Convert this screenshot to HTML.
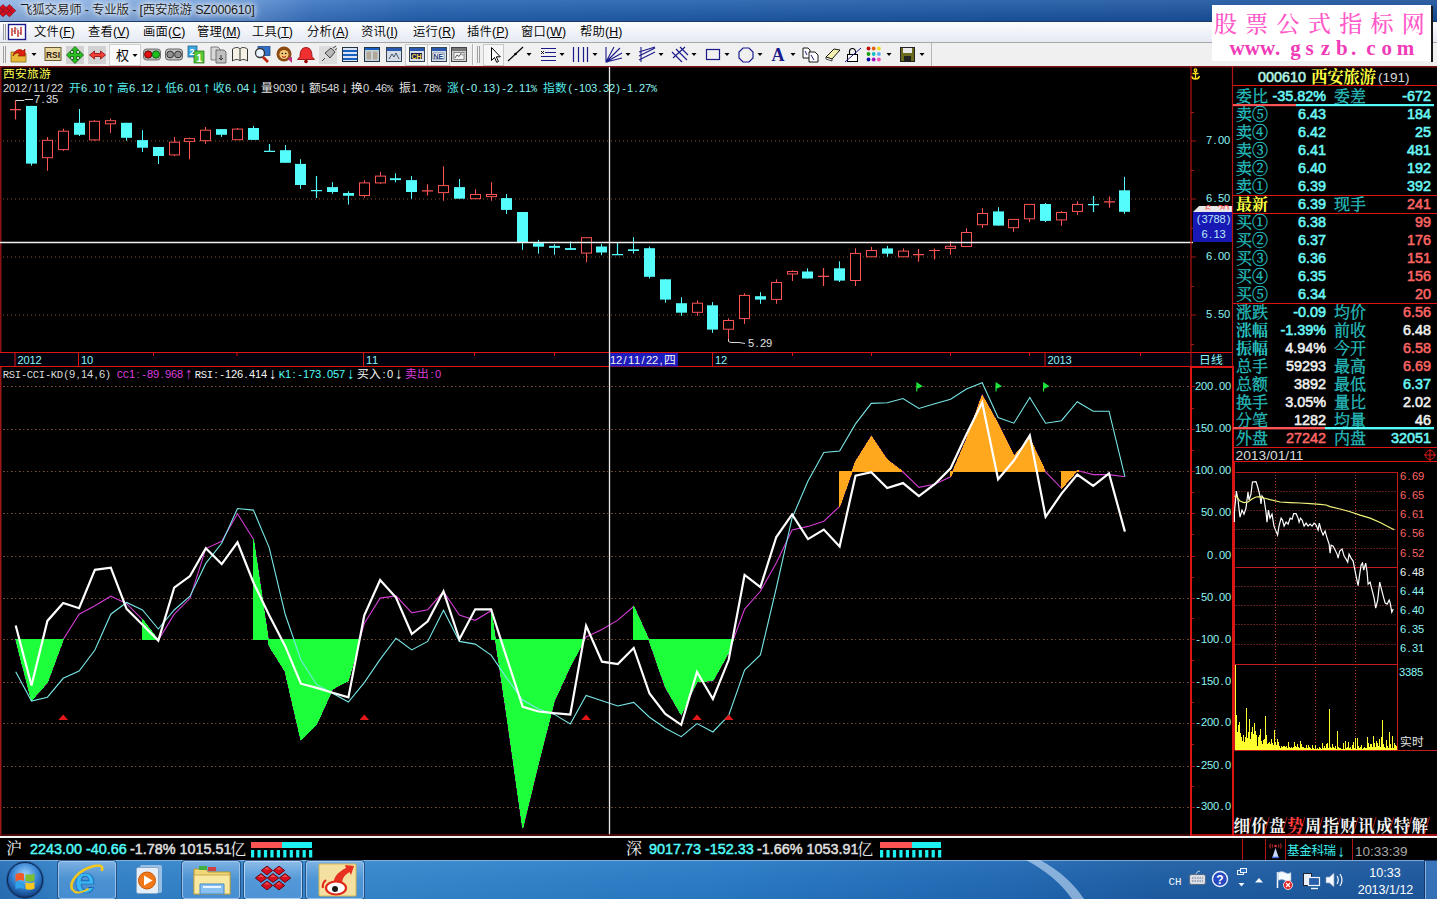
<!DOCTYPE html>
<html lang="zh"><head><meta charset="utf-8"><title>飞狐交易师 - 专业版 - [西安旅游 SZ000610]</title>
<style>
html,body{margin:0;padding:0;background:#000;}
body{width:1437px;height:899px;position:relative;overflow:hidden;font-family:"Liberation Sans","Noto Sans CJK SC",sans-serif;}
.abs{position:absolute;}
#titlebar{left:0;top:0;width:1437px;height:21px;background:linear-gradient(90deg,#8fb4e4 0,#82abe0 120px,#6293d4 240px,#3a75c2 310px,#2563b2 420px,#1c59a6 900px,#174f98 1437px);}
#titlebar .shade{left:0;top:0;width:1437px;height:21px;background:linear-gradient(180deg,rgba(255,255,255,.10),rgba(0,0,30,.10));}
#titletext{left:20px;top:2px;font-size:12.5px;line-height:17px;color:#1a1a1a;font-weight:350;white-space:nowrap;text-shadow:0 0 4px #fff,0 0 6px #fff,0 0 8px #dfe9f8;letter-spacing:-0.2px;}
#menubar{left:0;top:21px;width:1437px;height:21px;background:linear-gradient(180deg,#fbfcfe,#eef1f7 60%,#e6eaf3);border-top:1px solid #1c3a66;box-sizing:border-box;}
#menubar span.mi{position:absolute;top:3px;font-size:12.3px;line-height:15px;color:#000;font-weight:350;letter-spacing:.15px;white-space:nowrap;}
#menubar u{text-decoration:underline;}
#toolbar{left:0;top:42px;width:1437px;height:24px;background:#f0f0f0;border-top:1px solid #a8a8a8;box-sizing:border-box;}
#wm{left:1212px;top:5px;width:219px;height:56px;background:#fff;}
svg{position:absolute;left:0;top:0;}
</style></head><body>
<div id="titlebar" class="abs"><div class="shade abs"></div></div>
<svg width="20" height="21" viewBox="0 0 20 21" style="left:0;top:0"><g fill="#d80c1c" stroke="#6a0008" stroke-width=".5"><path d="M-0.2 7.5l3.200-2.900 3.200 2.900-3.200 2.900z"/><path d="M6.2 7.5l3.200-2.900 3.200 2.900-3.200 2.900z"/><path d="M-3.4 10.7l3.200-2.900 3.200 2.900-3.200 2.900z"/><path d="M3 10.7l3.200-2.900 3.200 2.900-3.200 2.900z"/><path d="M9.4 10.7l3.200-2.900 3.200 2.900-3.200 2.900z"/><path d="M-0.2 13.9l3.200-2.900 3.200 2.900-3.200 2.900z"/><path d="M6.2 13.9l3.200-2.900 3.200 2.900-3.200 2.900z"/></g></svg>
<div id="titletext" class="abs">飞狐交易师 - 专业版 - [西安旅游 SZ000610]</div>
<div id="menubar" class="abs">
<svg width="30" height="20" viewBox="0 0 30 20" style="left:0;top:0"><path d="M3.5 2v16M5.5 2v16" stroke="#9a9a9a" stroke-width="1"/><rect x="8.5" y="2.5" width="17" height="15" fill="#fff" stroke="#1a1a8a" stroke-width="1.4"/><path d="M12 6v8M15 5v7M18 8v7M21 5v8" stroke="#c01818" stroke-width="1.3"/><path d="M13.5 9h1M16.5 7h1M19.5 11h1" stroke="#111" stroke-width="1"/></svg>
<span class="mi" style="left:34px">文件(<u>F</u>)</span>
<span class="mi" style="left:88px">查看(<u>V</u>)</span>
<span class="mi" style="left:143px">画面(<u>C</u>)</span>
<span class="mi" style="left:197px">管理(<u>M</u>)</span>
<span class="mi" style="left:252px">工具(<u>T</u>)</span>
<span class="mi" style="left:307px">分析(<u>A</u>)</span>
<span class="mi" style="left:361px">资讯(<u>I</u>)</span>
<span class="mi" style="left:413px">运行(<u>R</u>)</span>
<span class="mi" style="left:467px">插件(<u>P</u>)</span>
<span class="mi" style="left:521px">窗口(<u>W</u>)</span>
<span class="mi" style="left:580px">帮助(<u>H</u>)</span>
</div>
<div id="toolbar" class="abs"></div>
<svg width="1437" height="70" viewBox="0 0 1437 70"><path d="M3.5 46v17M5.5 46v17" stroke="#a0a0a0"/><path d="M11 52h6l1 1.5h8v8.5h-15z" fill="#e8b838" stroke="#8a6a10" stroke-width=".8"/><path d="M13 56c1-6 7-8 10-5l2-2v7h-7l2-2c-2-2-5-1-7 2z" fill="#e02010" stroke="#7a0a00" stroke-width=".6"/><path d="M31.5 53h5l-2.5 3z" fill="#000"/><rect x="45" y="47.5" width="16" height="13" fill="#e8d8a0" stroke="#6a5a30" stroke-width="1"/><text x="46" y="58" font-family='"Liberation Sans",sans-serif' font-size="9" font-weight="bold" fill="#301808" textLength="14" lengthAdjust="spacingAndGlyphs">RSI</text><rect x="66" y="46" width="18" height="18" fill="#d2d2d2"/><path d="M75 46.5l4 4h-2.5v3h3v-2.5l4 4-4 4v-2.5h-3v3h2.5l-4 4-4-4h2.5v-3h-3v2.5l-4-4 4-4v2.5h3v-3h-2.5z" fill="#28c020" stroke="#0a5a08" stroke-width=".8"/><rect x="88" y="46" width="18" height="18" fill="#d2d2d2"/><path d="M89.500 55l5-4v2.500h6v-2.500l5 4-5 4v-2.500h-6v2.500z" fill="#f04038" stroke="#8a0a08" stroke-width=".8"/><rect x="109.500" y="44.500" width="31" height="21" fill="#fafafa" stroke="#d0d0d0"/><text x="116" y="60" font-family='"Liberation Sans","Noto Sans CJK SC",sans-serif' font-size="13" fill="#000">权</text><path d="M132.5 54h5l-2.5 3z" fill="#000"/><rect x="143.500" y="49" width="17" height="11" rx="3" fill="#b8b8b8" stroke="#555" stroke-width=".8"/><circle cx="148.200" cy="54.500" r="3.600" fill="#e01010" stroke="#600"/><circle cx="156" cy="54.500" r="3.600" fill="#20c020" stroke="#060"/><rect x="165.500" y="49" width="17" height="11" rx="3" fill="#c4c4c4" stroke="#444" stroke-width=".8"/><circle cx="170.200" cy="54.500" r="3.400" fill="#909090" stroke="#333"/><circle cx="178" cy="54.500" r="3.400" fill="#909090" stroke="#333"/><rect x="188" y="46" width="9" height="11" fill="#40a8e0" stroke="#105080" stroke-width=".7"/><rect x="194" y="51" width="10" height="12" fill="#58c838" stroke="#1a6a10" stroke-width=".7"/><text x="189.500" y="55" font-size="9" font-weight="bold" fill="#fff" font-family='"Liberation Sans",sans-serif'>2</text><text x="196.500" y="61.500" font-size="10" font-weight="bold" fill="#fff" font-family='"Liberation Sans",sans-serif'>1</text><path d="M211 47h7l2 2v11h-9z" fill="#d8d8d8" stroke="#666" stroke-width=".8"/><path d="M216 50h8l2 2v11h-10z" fill="#c0c0c0" stroke="#555" stroke-width=".8"/><path d="M221 55v5m-2-2l2 2 2-2" stroke="#333" fill="none"/><path d="M232.500 49c3-2 6-2 7.500 0 1.500-2 4.500-2 7.500 0v12c-3-2-6-2-7.500 0-1.500-2-4.500-2-7.500 0z" fill="#f4f0e4" stroke="#333" stroke-width="1"/><path d="M240 49v12" stroke="#333"/><rect x="258" y="46.500" width="12" height="9" fill="#3070c8" stroke="#123a7a" stroke-width=".7"/><circle cx="260" cy="53" r="4.500" fill="#e8f4ff" stroke="#333" stroke-width="1.300"/><path d="M263 57l5 5" stroke="#c02010" stroke-width="2.600"/><circle cx="284" cy="54" r="7.500" fill="#8a4a10"/><circle cx="284" cy="54.500" r="4.600" fill="#f4c878"/><circle cx="282.300" cy="53.500" r=".8"/><circle cx="285.700" cy="53.500" r=".8"/><path d="M282 56.500q2 1.500 4 0" stroke="#a02010" fill="none"/><path d="M287 58l5-1v6z" fill="#c03080"/><path d="M306 47.500c5 0 6 5 6 9l2.500 3h-17l2.500-3c0-4 1-9 6-9z" fill="#f03030" stroke="#800" stroke-width=".8"/><circle cx="306" cy="61.500" r="1.800" fill="#900"/><rect x="319" y="46" width="18" height="18" fill="#dcdcdc"/><path d="M322 61l3-3m0-5l6-5 4 4-5 6z" fill="#b8b8b8" stroke="#444" stroke-width="1"/><path d="M333 48l3-2M335 50l2-1.500" stroke="#444"/><rect x="342.500" y="47.500" width="15" height="14" fill="#d8e4f4" stroke="#234" stroke-width="1"/><path d="M343 51h14M343 55h14M343 59h14" stroke="#1860c0" stroke-width="2"/><rect x="364.500" y="47.500" width="15" height="14" fill="#c8d0d8" stroke="#234" stroke-width="1"/><path d="M365 49h14" stroke="#1860c0" stroke-width="2"/><rect x="366.500" y="51.500" width="4.500" height="8" fill="#b0a898"/><rect x="373" y="51.500" width="4.500" height="8" fill="#b0a898"/><rect x="386.5" y="47.500" width="15" height="14" fill="#d4dce8" stroke="#345" stroke-width="1"/><path d="M387 49.500h14" stroke="#2858b0" stroke-width="3"/><path d="M389 59l3-5 2 3 2-4 3 6" stroke="#345" fill="none" stroke-width=".9"/><rect x="405.500" y="44.500" width="22" height="21" fill="#f8f8f8" stroke="#c8c8c8"/><rect x="409.5" y="47.500" width="15" height="14" fill="#d4dce8" stroke="#345" stroke-width="1"/><path d="M410 49.500h14" stroke="#2858b0" stroke-width="3"/><rect x="411" y="53" width="11" height="6" fill="#181858"/><text x="411.500" y="59" font-size="7" font-weight="bold" fill="#ffe040" font-family='"Liberation Sans",sans-serif'>CH</text><rect x="427.500" y="44.500" width="22" height="21" fill="#f8f8f8" stroke="#c8c8c8"/><rect x="431.5" y="47.500" width="15" height="14" fill="#d4dce8" stroke="#345" stroke-width="1"/><path d="M432 49.500h14" stroke="#2858b0" stroke-width="3"/><rect x="433" y="53" width="11" height="6" fill="#fff" stroke="#346" stroke-width=".5"/><text x="433.500" y="59" font-size="7" font-weight="bold" fill="#1a3a7a" font-family='"Liberation Sans",sans-serif'>NE</text><rect x="451.500" y="47.500" width="15" height="14" fill="#d0d0d0" stroke="#444" stroke-width="1"/><path d="M452 49.500h14" stroke="#777" stroke-width="3"/><rect x="454" y="52.500" width="10" height="7" fill="#f4f4f4" stroke="#555" stroke-width=".6"/><path d="M455 58l2-3 2 1.500 2-3 2 2" stroke="#333" fill="none" stroke-width=".8"/><path d="M472.500 44v21" stroke="#b0b0b0"/><path d="M473.500 44v21" stroke="#fff"/><path d="M477.500 46v17M479.500 46v17" stroke="#a0a0a0"/><rect x="483.500" y="44.500" width="20" height="21" fill="#f6f6f6" stroke="#c8c8c8"/><path d="M491.500 47.500v13l3-3 2.200 4.800 1.800-.8-2.200-4.700h4z" fill="#fff" stroke="#000" stroke-width="1"/><path d="M508 61l15-14" stroke="#000" stroke-width="1.200"/><circle cx="515.500" cy="54" r="1.300"/><path d="M526.5 53h5l-2.5 3z" fill="#000"/><path d="M541 48.500h15M545 52.500h11M541 56.500h15M541 60.500h15" stroke="#1a1a8a" stroke-width="1.200"/><path d="M541 51l3 3m0-3l-3 3" stroke="#000" stroke-width=".9"/><path d="M559.5 53h5l-2.5 3z" fill="#000"/><path d="M573.500 47v15M578.500 47v15M583.500 47v15M587.500 47v15" stroke="#1a1a8a" stroke-width="1.200"/><path d="M592.5 53h5l-2.5 3z" fill="#000"/><path d="M606 47v15h2M606 62l16-4M606 62l16-9M606 62l14-14M606 62l8-15" stroke="#1a1a8a" stroke-width="1.100" fill="none"/><path d="M625.5 53h5l-2.5 3z" fill="#000"/><path d="M641 47v15M639 56l16-8M639 60l16-8M639 52l16-5" stroke="#1a1a8a" stroke-width="1.100" fill="none"/><path d="M658.5 53h5l-2.5 3z" fill="#000"/><path d="M672 52l10 10M676 49l11 11M680 47l8 8M673 58l12-11" stroke="#1a1a8a" stroke-width="1.100" fill="none"/><path d="M691.5 53h5l-2.5 3z" fill="#000"/><rect x="706.500" y="49.500" width="13" height="10" fill="none" stroke="#1a1a8a" stroke-width="1.200"/><path d="M724.5 53h5l-2.5 3z" fill="#000"/><path d="M743 48h6l4 4v6l-4 4h-6l-4-4v-6z" fill="none" stroke="#1a1a8a" stroke-width="1.200"/><path d="M757.5 53h5l-2.5 3z" fill="#000"/><text x="771.500" y="61" font-family='"Liberation Serif",serif' font-size="18" font-weight="bold" fill="#1a1a8a">A</text><path d="M790.5 53h5l-2.5 3z" fill="#000"/><path d="M803 48h5l2 2v8h-7z" fill="#fff" stroke="#000" stroke-width=".9"/><path d="M809 52h6l3 3v7h-9z" fill="#fff" stroke="#000" stroke-width=".9"/><path d="M805 51l2 4M811 55l3 5" stroke="#1a1a8a"/><path d="M826 57l8-8 6 1-8 9z" fill="#f4f0b0" stroke="#000" stroke-width=".9"/><path d="M826 57l6 2v2l-6-2z" fill="#fff" stroke="#000" stroke-width=".7"/><rect x="847.500" y="54.500" width="10" height="7" fill="#fff" stroke="#000" stroke-width="1"/><path d="M849.500 54.500v-3a3 3 0 0 1 6 0v3" fill="none" stroke="#000" stroke-width="1.100"/><path d="M845 62l16-14" stroke="#1a1a8a" stroke-width="1"/><circle cx="868.5" cy="48.5" r="1.900" fill="#c01010"/><circle cx="873.7" cy="48.5" r="1.900" fill="#e06010"/><circle cx="878.9" cy="48.5" r="1.900" fill="#f0e020"/><circle cx="868.5" cy="54" r="1.900" fill="#10a010"/><circle cx="873.7" cy="54" r="1.900" fill="#10c0c0"/><circle cx="878.9" cy="54" r="1.900" fill="#60b0f0"/><circle cx="868.5" cy="59.5" r="1.900" fill="#1010a0"/><circle cx="873.7" cy="59.5" r="1.900" fill="#a010c0"/><circle cx="878.9" cy="59.5" r="1.900" fill="#f050b0"/><path d="M886.5 53h5l-2.5 3z" fill="#000"/><rect x="900.500" y="47.500" width="14" height="14" fill="#6a6a20" stroke="#222" stroke-width="1"/><rect x="903" y="48" width="9" height="5" fill="#e8e8e8"/><rect x="904" y="56" width="7" height="5" fill="#222"/><path d="M919.5 53h5l-2.5 3z" fill="#000"/><path d="M931.500 43v23" stroke="#b8b8b8"/><path d="M0 65.500h932" stroke="#fff" stroke-width="0"/></svg>
<div id="wm" class="abs"></div>
<svg width="1437" height="70" viewBox="0 0 1437 70"><rect x="1431" y="6" width="2" height="56" fill="#181818"/><text x="1214.0 1245.3 1276.6 1307.9 1339.2 1370.5 1401.8" y="31.5" font-family='"Liberation Serif","Noto Serif CJK SC",serif' font-size="23" font-weight="500" fill="#ff58c8">股票公式指标网</text><text x="1229.5 1244.7 1259.9 1275.1 1290.3 1305.5 1320.7 1335.9 1351.1 1366.3 1381.5 1396.7" y="54.5" font-family='"Liberation Serif","Noto Serif CJK SC",serif' font-size="21" font-weight="bold" fill="#f03cb8">www.gszb.com</text></svg>
<svg width="1437" height="899" viewBox="0 0 1437 899" shape-rendering="auto"><rect x="0" y="66" width="1437" height="772" fill="#000"/><rect x="0" y="66" width="1437" height="1.5" fill="#7a1418"/><rect x="0" y="66" width="1.5" height="302" fill="#8a1418"/><path d="M3 141H1190" stroke="#84502f" stroke-width="1" stroke-dasharray="1 3"/><path d="M1191 141h5" stroke="#a01414"/><path d="M3 199H1190" stroke="#84502f" stroke-width="1" stroke-dasharray="1 3"/><path d="M1191 199h5" stroke="#a01414"/><path d="M3 257H1190" stroke="#84502f" stroke-width="1" stroke-dasharray="1 3"/><path d="M1191 257h5" stroke="#a01414"/><path d="M3 315H1190" stroke="#84502f" stroke-width="1" stroke-dasharray="1 3"/><path d="M1191 315h5" stroke="#a01414"/><path d="M1191 112.5h3" stroke="#a01414"/><path d="M1191 170.5h3" stroke="#a01414"/><path d="M1191 228.5h3" stroke="#a01414"/><path d="M1191 286.5h3" stroke="#a01414"/><path d="M1191 344.5h3" stroke="#a01414"/><path d="M15.5 100.6V119.6M10 109.7h11" stroke="#fc5454" stroke-width="1.2"/><path d="M31.5 105.9V165.7" stroke="#54fcfc"/><rect x="26" y="105.9" width="11" height="57.7" fill="#54fcfc"/><path d="M47.5 137.0V140.3M47.5 157.7V170.8" stroke="#fc5454"/><rect x="42.5" y="140.3" width="10" height="17.4" fill="#000" stroke="#fc5454"/><path d="M63.5 128.7V131.2M63.5 149.6V150.9" stroke="#fc5454"/><rect x="58.5" y="131.2" width="10" height="18.4" fill="#000" stroke="#fc5454"/><path d="M79.5 109V136" stroke="#54fcfc"/><rect x="74" y="122.8" width="11" height="12.0" fill="#54fcfc"/><path d="M94.5 120.2V121.3M94.5 139.9V140.7" stroke="#fc5454"/><rect x="89.5" y="121.3" width="10" height="18.6" fill="#000" stroke="#fc5454"/><path d="M110.5 118.5V120.7M110.5 123.8V132.9" stroke="#fc5454"/><rect x="105.5" y="120.7" width="10" height="3.1" fill="#000" stroke="#fc5454"/><path d="M126.5 122.8V140.7" stroke="#54fcfc"/><rect x="121" y="122.8" width="11" height="15.0" fill="#54fcfc"/><path d="M142.5 130.2V152" stroke="#54fcfc"/><rect x="137" y="140.1" width="11" height="7.6" fill="#54fcfc"/><path d="M158.5 147V164" stroke="#54fcfc"/><rect x="153" y="147.0" width="11" height="9.0" fill="#54fcfc"/><path d="M174.5 137.0V142.2M174.5 154.9V156.2" stroke="#fc5454"/><rect x="169.5" y="142.2" width="10" height="12.7" fill="#000" stroke="#fc5454"/><path d="M189.5 137.6V138.6M189.5 141.4V159.3" stroke="#fc5454"/><rect x="184.5" y="138.6" width="10" height="2.8" fill="#000" stroke="#fc5454"/><path d="M205.5 127.0V130.2M205.5 140.7V143.9" stroke="#fc5454"/><rect x="200.5" y="130.2" width="10" height="10.5" fill="#000" stroke="#fc5454"/><path d="M221.5 129.1V136.9" stroke="#54fcfc"/><rect x="216" y="129.1" width="11" height="5.7" fill="#54fcfc"/><path d="M237.5 128.0V129.1M237.5 139.7V140.0" stroke="#fc5454"/><rect x="232.5" y="129.1" width="10" height="10.6" fill="#000" stroke="#fc5454"/><path d="M253.5 125.9V139.9" stroke="#54fcfc"/><rect x="248" y="128.0" width="11" height="11.9" fill="#54fcfc"/><path d="M269.5 143.9V151.3M264 151.3h11" stroke="#54fcfc" stroke-width="1.2"/><path d="M285.5 145.1V162.8" stroke="#54fcfc"/><rect x="280" y="150.2" width="11" height="12.6" fill="#54fcfc"/><path d="M300.5 159.2V188.8" stroke="#54fcfc"/><rect x="295" y="163.9" width="11" height="21.1" fill="#54fcfc"/><path d="M316.5 176.1V198.1M311 190.7h11" stroke="#54fcfc" stroke-width="1.2"/><path d="M332.5 182.2V193.8" stroke="#54fcfc"/><rect x="327" y="187.1" width="11" height="4.9" fill="#54fcfc"/><path d="M348.5 191.3V204.6" stroke="#54fcfc"/><rect x="343" y="193.0" width="11" height="2.8" fill="#54fcfc"/><path d="M364.5 180.3V182.9M364.5 195.5V197.7" stroke="#fc5454"/><rect x="359.5" y="182.9" width="10" height="12.6" fill="#000" stroke="#fc5454"/><path d="M380.5 171.9V176.1M380.5 182.9V183.9" stroke="#fc5454"/><rect x="375.5" y="176.1" width="10" height="6.8" fill="#000" stroke="#fc5454"/><path d="M395.5 173.3V182.4" stroke="#54fcfc"/><rect x="390" y="178.2" width="11" height="1.9" fill="#54fcfc"/><path d="M411.5 176.1V198.9" stroke="#54fcfc"/><rect x="406" y="180.1" width="11" height="11.9" fill="#54fcfc"/><path d="M427.5 184.3V195.5M422 190.9h11" stroke="#fc5454" stroke-width="1.2"/><path d="M443.5 166.4V185.6M443.5 192.6V200.8" stroke="#fc5454"/><rect x="438.5" y="185.6" width="10" height="7.0" fill="#000" stroke="#fc5454"/><path d="M459.5 179V198.7" stroke="#54fcfc"/><rect x="454" y="187.1" width="11" height="11.6" fill="#54fcfc"/><path d="M475.5 189.2V194.5M475.5 198.7V198.7" stroke="#fc5454"/><rect x="470.5" y="194.5" width="10" height="4.2" fill="#000" stroke="#fc5454"/><path d="M491.5 182.2V194.5M491.5 196.6V200.8" stroke="#fc5454"/><rect x="486.5" y="194.5" width="10" height="2.1" fill="#000" stroke="#fc5454"/><path d="M506.5 194.1V213.9" stroke="#54fcfc"/><rect x="501" y="198.1" width="11" height="11.8" fill="#54fcfc"/><path d="M522.5 212V249.9" stroke="#54fcfc"/><rect x="517" y="212.0" width="11" height="30.0" fill="#54fcfc"/><path d="M538.5 239.9V253.7" stroke="#54fcfc"/><rect x="533" y="243.1" width="11" height="3.6" fill="#54fcfc"/><path d="M554.5 244.2V254.7" stroke="#54fcfc"/><rect x="549" y="245.9" width="11" height="1.9" fill="#54fcfc"/><path d="M570.5 241.5V249.9" stroke="#54fcfc"/><rect x="565" y="248.1" width="11" height="1.8" fill="#54fcfc"/><path d="M586.5 237.7V237.7M586.5 253.1V262.4" stroke="#fc5454"/><rect x="581.5" y="237.7" width="10" height="15.4" fill="#000" stroke="#fc5454"/><path d="M601.5 244V255.2" stroke="#54fcfc"/><rect x="596" y="246.5" width="11" height="6.0" fill="#54fcfc"/><path d="M617.5 243.0V254.6M612 254.6h11" stroke="#54fcfc" stroke-width="1.2"/><path d="M633.5 237.2V253.5" stroke="#54fcfc"/><rect x="628" y="249.3" width="11" height="1.7" fill="#54fcfc"/><path d="M649.5 246.5V278.5" stroke="#54fcfc"/><rect x="644" y="248.2" width="11" height="28.6" fill="#54fcfc"/><path d="M665.5 279.3V302.8" stroke="#54fcfc"/><rect x="660" y="279.3" width="11" height="20.3" fill="#54fcfc"/><path d="M681.5 297.3V315.9" stroke="#54fcfc"/><rect x="676" y="303.2" width="11" height="9.5" fill="#54fcfc"/><path d="M697.5 300.4V303.2M697.5 312.3V315.9" stroke="#fc5454"/><rect x="692.5" y="303.2" width="10" height="9.1" fill="#000" stroke="#fc5454"/><path d="M712.5 302.1V332.8" stroke="#54fcfc"/><rect x="707" y="305.3" width="11" height="24.3" fill="#54fcfc"/><path d="M728.5 318.4V320.5M728.5 329.2V339.1" stroke="#fc5454"/><rect x="723.5" y="320.5" width="10" height="8.7" fill="#000" stroke="#fc5454"/><path d="M744.5 293.3V295.4M744.5 318.6V323.9" stroke="#fc5454"/><rect x="739.5" y="295.4" width="10" height="23.2" fill="#000" stroke="#fc5454"/><path d="M760.5 292.2V303.8" stroke="#54fcfc"/><rect x="755" y="296.2" width="11" height="3.4" fill="#54fcfc"/><path d="M776.5 279.3V282.5M776.5 299.4V303.8" stroke="#fc5454"/><rect x="771.5" y="282.5" width="10" height="16.9" fill="#000" stroke="#fc5454"/><path d="M792.5 270.4V271.5M792.5 274.0V281.0" stroke="#fc5454"/><rect x="787.5" y="271.5" width="10" height="2.5" fill="#000" stroke="#fc5454"/><path d="M807.5 268.3V278.5" stroke="#54fcfc"/><rect x="802" y="271.5" width="11" height="7.0" fill="#54fcfc"/><path d="M823.5 267.9V285.9M818 276.3h11" stroke="#fc5454" stroke-width="1.2"/><path d="M839.5 261.3V282" stroke="#54fcfc"/><rect x="834" y="268.3" width="11" height="12.3" fill="#54fcfc"/><path d="M855.5 248.3V253.4M855.5 280.5V286.0" stroke="#fc5454"/><rect x="850.5" y="253.4" width="10" height="27.1" fill="#000" stroke="#fc5454"/><path d="M871.5 246.9V250.5M871.5 256.8V256.8" stroke="#fc5454"/><rect x="866.5" y="250.5" width="10" height="6.3" fill="#000" stroke="#fc5454"/><path d="M887.5 245.9V256.8" stroke="#54fcfc"/><rect x="882" y="248.4" width="11" height="5.3" fill="#54fcfc"/><path d="M903.5 248.4V251.1M903.5 256.8V256.8" stroke="#fc5454"/><rect x="898.5" y="251.1" width="10" height="5.7" fill="#000" stroke="#fc5454"/><path d="M918.5 249.0V261.7M913 254.7h11" stroke="#fc5454" stroke-width="1.2"/><path d="M934.5 248.4V259.4M929 250.5h11" stroke="#fc5454" stroke-width="1.2"/><path d="M950.5 241.0V246.3M950.5 248.4V254.7" stroke="#fc5454"/><rect x="945.5" y="246.3" width="10" height="2.1" fill="#000" stroke="#fc5454"/><path d="M966.5 228.3V232.5M966.5 246.5V246.5" stroke="#fc5454"/><rect x="961.5" y="232.5" width="10" height="14.0" fill="#000" stroke="#fc5454"/><path d="M982.5 208.2V213.5M982.5 224.7V227.9" stroke="#fc5454"/><rect x="977.5" y="213.5" width="10" height="11.2" fill="#000" stroke="#fc5454"/><path d="M998.5 207.2V225.6" stroke="#54fcfc"/><rect x="993" y="211.4" width="11" height="14.2" fill="#54fcfc"/><path d="M1013.5 219.4V219.4M1013.5 227.7V231.9" stroke="#fc5454"/><rect x="1008.5" y="219.4" width="10" height="8.3" fill="#000" stroke="#fc5454"/><path d="M1029.5 204.4V204.4M1029.5 218.8V222.0" stroke="#fc5454"/><rect x="1024.5" y="204.4" width="10" height="14.4" fill="#000" stroke="#fc5454"/><path d="M1045.5 203V222" stroke="#54fcfc"/><rect x="1040" y="204.0" width="11" height="16.9" fill="#54fcfc"/><path d="M1061.5 211.0V212.5M1061.5 219.9V225.8" stroke="#fc5454"/><rect x="1056.5" y="212.5" width="10" height="7.4" fill="#000" stroke="#fc5454"/><path d="M1077.5 201.2V204.4M1077.5 211.4V215.0" stroke="#fc5454"/><rect x="1072.5" y="204.4" width="10" height="7.0" fill="#000" stroke="#fc5454"/><path d="M1093.5 196.0V212.0M1088 204.6h11" stroke="#54fcfc" stroke-width="1.2"/><path d="M1109.5 196.6V207.8M1104 201.9h11" stroke="#fc5454" stroke-width="1.2"/><path d="M1124.5 176.9V213.9" stroke="#54fcfc"/><rect x="1119" y="190.3" width="11" height="21.5" fill="#54fcfc"/><path d="M15.500 100.500H24L25 99.500H33" stroke="#d8d8d8" fill="none"/><text x="37.0 43.0 49.0 55.0" y="103.1" fill="#e0e0e0" text-anchor="middle" font-family='"Liberation Sans","Noto Sans CJK SC",sans-serif' font-size="11.16">7.35</text><path d="M728.500 339V341.500L731 342.500H739L745 343.500" stroke="#d8d8d8" fill="none"/><text x="751.0 757.0 763.0 769.0" y="347.1" fill="#e0e0e0" text-anchor="middle" font-family='"Liberation Sans","Noto Sans CJK SC",sans-serif' font-size="11.16">5.29</text><text x="3.0 15.0 27.0 39.0" y="77.8" fill="#ffff54" font-family='"Liberation Sans","Noto Sans CJK SC",sans-serif' font-size="11.76">西安旅游</text><text x="6.0 12.0 18.0 24.0 30.0 36.0 42.0 48.0 54.0 60.0" y="92.1" fill="#dcdcdc" text-anchor="middle" font-family='"Liberation Sans","Noto Sans CJK SC",sans-serif' font-size="11.16">2012/11/22</text><text x="69.0" y="91.8" fill="#54e8e8" font-family='"Liberation Sans","Noto Sans CJK SC",sans-serif' font-size="11.76">开</text><text x="84.0 90.0 96.0 102.0" y="92.1" fill="#8cf4f4" text-anchor="middle" font-family='"Liberation Sans","Noto Sans CJK SC",sans-serif' font-size="11.16">6.10</text><text x="111.0" y="93.0" fill="#54fcfc" text-anchor="middle" font-family='"Liberation Sans","Noto Sans CJK SC",sans-serif' font-size="15.6">↑</text><text x="117.0" y="91.8" fill="#54e8e8" font-family='"Liberation Sans","Noto Sans CJK SC",sans-serif' font-size="11.76">高</text><text x="132.0 138.0 144.0 150.0" y="92.1" fill="#8cf4f4" text-anchor="middle" font-family='"Liberation Sans","Noto Sans CJK SC",sans-serif' font-size="11.16">6.12</text><text x="159.0" y="93.0" fill="#54fcfc" text-anchor="middle" font-family='"Liberation Sans","Noto Sans CJK SC",sans-serif' font-size="15.6">↓</text><text x="165.0" y="91.8" fill="#54e8e8" font-family='"Liberation Sans","Noto Sans CJK SC",sans-serif' font-size="11.76">低</text><text x="180.0 186.0 192.0 198.0" y="92.1" fill="#8cf4f4" text-anchor="middle" font-family='"Liberation Sans","Noto Sans CJK SC",sans-serif' font-size="11.16">6.01</text><text x="207.0" y="93.0" fill="#54fcfc" text-anchor="middle" font-family='"Liberation Sans","Noto Sans CJK SC",sans-serif' font-size="15.6">↑</text><text x="213.0" y="91.8" fill="#54e8e8" font-family='"Liberation Sans","Noto Sans CJK SC",sans-serif' font-size="11.76">收</text><text x="228.0 234.0 240.0 246.0" y="92.1" fill="#8cf4f4" text-anchor="middle" font-family='"Liberation Sans","Noto Sans CJK SC",sans-serif' font-size="11.16">6.04</text><text x="255.0" y="93.0" fill="#54fcfc" text-anchor="middle" font-family='"Liberation Sans","Noto Sans CJK SC",sans-serif' font-size="15.6">↓</text><text x="261.0" y="91.8" fill="#e4e4e4" font-family='"Liberation Sans","Noto Sans CJK SC",sans-serif' font-size="11.76">量</text><text x="276.0 282.0 288.0 294.0" y="92.1" fill="#d8d8d8" text-anchor="middle" font-family='"Liberation Sans","Noto Sans CJK SC",sans-serif' font-size="11.16">9030</text><text x="303.0" y="93.0" fill="#e0e0e0" text-anchor="middle" font-family='"Liberation Sans","Noto Sans CJK SC",sans-serif' font-size="15.6">↓</text><text x="309.0" y="91.8" fill="#e4e4e4" font-family='"Liberation Sans","Noto Sans CJK SC",sans-serif' font-size="11.76">额</text><text x="324.0 330.0 336.0" y="92.1" fill="#d8d8d8" text-anchor="middle" font-family='"Liberation Sans","Noto Sans CJK SC",sans-serif' font-size="11.16">548</text><text x="345.0" y="93.0" fill="#e0e0e0" text-anchor="middle" font-family='"Liberation Sans","Noto Sans CJK SC",sans-serif' font-size="15.6">↓</text><text x="351.0" y="91.8" fill="#e4e4e4" font-family='"Liberation Sans","Noto Sans CJK SC",sans-serif' font-size="11.76">换</text><text x="366.0 372.0 378.0 384.0 390.0" y="92.1" fill="#d8d8d8" text-anchor="middle" font-family='"Liberation Sans","Noto Sans CJK SC",sans-serif' font-size="11.16">0.46<tspan font-family='"Liberation Mono","Noto Sans CJK SC",monospace' font-size="10.56">%</tspan></text><text x="399.0" y="91.8" fill="#e4e4e4" font-family='"Liberation Sans","Noto Sans CJK SC",sans-serif' font-size="11.76">振</text><text x="414.0 420.0 426.0 432.0 438.0" y="92.1" fill="#d8d8d8" text-anchor="middle" font-family='"Liberation Sans","Noto Sans CJK SC",sans-serif' font-size="11.16">1.78<tspan font-family='"Liberation Mono","Noto Sans CJK SC",monospace' font-size="10.56">%</tspan></text><text x="447.0" y="91.8" fill="#54e8e8" font-family='"Liberation Sans","Noto Sans CJK SC",sans-serif' font-size="11.76">涨</text><text x="462.0 468.0 474.0 480.0 486.0 492.0 498.0 504.0 510.0 516.0 522.0 528.0 534.0" y="92.1" fill="#8cf4f4" text-anchor="middle" font-family='"Liberation Sans","Noto Sans CJK SC",sans-serif' font-size="11.16">(-0.13)-2.11<tspan font-family='"Liberation Mono","Noto Sans CJK SC",monospace' font-size="10.56">%</tspan></text><text x="543.0 555.0" y="91.8" fill="#54e8e8" font-family='"Liberation Sans","Noto Sans CJK SC",sans-serif' font-size="11.76">指数</text><text x="570.0 576.0 582.0 588.0 594.0 600.0 606.0 612.0 618.0 624.0 630.0 636.0 642.0 648.0 654.0" y="92.1" fill="#8cf4f4" text-anchor="middle" font-family='"Liberation Sans","Noto Sans CJK SC",sans-serif' font-size="11.16">(-103.32)-1.27<tspan font-family='"Liberation Mono","Noto Sans CJK SC",monospace' font-size="10.56">%</tspan></text><text x="1209.0 1215.0 1221.0 1227.0" y="143.8" fill="#8cf4f4" text-anchor="middle" font-family='"Liberation Sans","Noto Sans CJK SC",sans-serif' font-size="11.16">7.00</text><text x="1209.0 1215.0 1221.0 1227.0" y="201.8" fill="#8cf4f4" text-anchor="middle" font-family='"Liberation Sans","Noto Sans CJK SC",sans-serif' font-size="11.16">6.50</text><text x="1209.0 1215.0 1221.0 1227.0" y="259.8" fill="#8cf4f4" text-anchor="middle" font-family='"Liberation Sans","Noto Sans CJK SC",sans-serif' font-size="11.16">6.00</text><text x="1209.0 1215.0 1221.0 1227.0" y="317.8" fill="#8cf4f4" text-anchor="middle" font-family='"Liberation Sans","Noto Sans CJK SC",sans-serif' font-size="11.16">5.50</text><g stroke="#ffe020" fill="none" stroke-width="1.300"><circle cx="1195.500" cy="70.200" r="1.300"/><path d="M1195.500 71.500v7M1192.500 73.500h6M1191.500 76c.5 2.500 2 3 4 3s3.500-.5 4-3"/></g><path d="M1193 212L1199 206H1232V212z" fill="#e8e8e8"/><clipPath id="c620"><rect x="1193" y="203" width="39" height="6.500"/></clipPath><g clip-path="url(#c620)"><text x="1208.0 1214.0 1220.0 1226.0" y="213.1" fill="#fc5454" text-anchor="middle" font-family='"Liberation Sans","Noto Sans CJK SC",sans-serif' font-size="11.16">6.20</text></g><rect x="1193" y="212" width="39" height="30" fill="#1818b4"/><text x="1198.5 1204.5 1210.5 1216.5 1222.5 1228.5" y="223.1" fill="#b8e8f8" text-anchor="middle" font-family='"Liberation Sans","Noto Sans CJK SC",sans-serif' font-size="11.16">(3788)</text><text x="1204.5 1210.5 1216.5 1222.5" y="238.1" fill="#b8f0f8" text-anchor="middle" font-family='"Liberation Sans","Noto Sans CJK SC",sans-serif' font-size="11.16">6.13</text><rect x="0" y="353" width="1232" height="13" fill="#02020f"/><path d="M0 352.500H1232M0 366.500H1232" stroke="#dc1414"/><path d="M15 353V366" stroke="#dc1414"/><text x="20.5 26.5 32.5 38.5" y="364.1" fill="#8cf4f4" text-anchor="middle" font-family='"Liberation Sans","Noto Sans CJK SC",sans-serif' font-size="11.16">2012</text><path d="M78.5 353V366" stroke="#dc1414"/><text x="84.0 90.0" y="364.1" fill="#8cf4f4" text-anchor="middle" font-family='"Liberation Sans","Noto Sans CJK SC",sans-serif' font-size="11.16">10</text><path d="M363.5 353V366" stroke="#dc1414"/><text x="369.0 375.0" y="364.1" fill="#8cf4f4" text-anchor="middle" font-family='"Liberation Sans","Noto Sans CJK SC",sans-serif' font-size="11.16">11</text><path d="M712.5 353V366" stroke="#dc1414"/><text x="718.0 724.0" y="364.1" fill="#8cf4f4" text-anchor="middle" font-family='"Liberation Sans","Noto Sans CJK SC",sans-serif' font-size="11.16">12</text><path d="M1045 353V366" stroke="#dc1414"/><text x="1050.5 1056.5 1062.5 1068.5" y="364.1" fill="#8cf4f4" text-anchor="middle" font-family='"Liberation Sans","Noto Sans CJK SC",sans-serif' font-size="11.16">2013</text><path d="M153.5 353v3" stroke="#dc1414"/><path d="M237 353v3" stroke="#dc1414"/><path d="M474.5 353v3" stroke="#dc1414"/><path d="M554.5 353v3" stroke="#dc1414"/><path d="M792.5 353v3" stroke="#dc1414"/><path d="M871.5 353v3" stroke="#dc1414"/><path d="M950.5 353v3" stroke="#dc1414"/><path d="M1029.5 353v3" stroke="#dc1414"/><path d="M1140.5 353v3" stroke="#dc1414"/><rect x="609" y="353" width="69" height="13.500" fill="#1c1cbc"/><text x="613.0 619.0 625.0 631.0 637.0 643.0 649.0 655.0 661.0" y="364.1" fill="#f4f4f4" text-anchor="middle" font-family='"Liberation Sans","Noto Sans CJK SC",sans-serif' font-size="11.16">12/11/22,</text><text x="664.0" y="363.8" fill="#f4f4f4" font-family='"Liberation Sans","Noto Sans CJK SC",sans-serif' font-size="11.76">四</text><text x="1199.0 1211.0" y="363.8" fill="#8cf4f4" font-family='"Liberation Sans","Noto Sans CJK SC",sans-serif' font-size="11.76">日线</text><path d="M3 386.5H1190" stroke="#744830" stroke-width="1" stroke-dasharray="2 2 1 3"/><path d="M1192 386.5h3" stroke="#a01414"/><text x="1198.0 1204.0 1210.0 1216.0 1222.0 1228.0" y="389.6" fill="#8cf4f4" text-anchor="middle" font-family='"Liberation Sans","Noto Sans CJK SC",sans-serif' font-size="11.16">200.00</text><path d="M3 429.5H1190" stroke="#744830" stroke-width="1" stroke-dasharray="2 2 1 3"/><path d="M1192 429.5h3" stroke="#a01414"/><text x="1198.0 1204.0 1210.0 1216.0 1222.0 1228.0" y="431.9" fill="#8cf4f4" text-anchor="middle" font-family='"Liberation Sans","Noto Sans CJK SC",sans-serif' font-size="11.16">150.00</text><path d="M3 471.5H1190" stroke="#744830" stroke-width="1" stroke-dasharray="2 2 1 3"/><path d="M1192 471.5h3" stroke="#a01414"/><text x="1198.0 1204.0 1210.0 1216.0 1222.0 1228.0" y="474.1" fill="#8cf4f4" text-anchor="middle" font-family='"Liberation Sans","Noto Sans CJK SC",sans-serif' font-size="11.16">100.00</text><path d="M3 513.5H1190" stroke="#744830" stroke-width="1" stroke-dasharray="2 2 1 3"/><path d="M1192 513.5h3" stroke="#a01414"/><text x="1204.0 1210.0 1216.0 1222.0 1228.0" y="516.4" fill="#8cf4f4" text-anchor="middle" font-family='"Liberation Sans","Noto Sans CJK SC",sans-serif' font-size="11.16">50.00</text><path d="M3 556.5H1190" stroke="#744830" stroke-width="1" stroke-dasharray="2 2 1 3"/><path d="M1192 556.5h3" stroke="#a01414"/><text x="1210.0 1216.0 1222.0 1228.0" y="558.7" fill="#8cf4f4" text-anchor="middle" font-family='"Liberation Sans","Noto Sans CJK SC",sans-serif' font-size="11.16">0.00</text><path d="M3 598.5H1190" stroke="#744830" stroke-width="1" stroke-dasharray="2 2 1 3"/><path d="M1192 598.5h3" stroke="#a01414"/><text x="1198.0 1204.0 1210.0 1216.0 1222.0 1228.0" y="600.6" fill="#8cf4f4" text-anchor="middle" font-family='"Liberation Sans","Noto Sans CJK SC",sans-serif' font-size="11.16">-50.00</text><path d="M3 639.5H1190" stroke="#744830" stroke-width="1" stroke-dasharray="2 2 1 3"/><path d="M1192 639.5h3" stroke="#a01414"/><text x="1198.0 1204.0 1210.0 1216.0 1222.0 1228.0" y="642.5" fill="#8cf4f4" text-anchor="middle" font-family='"Liberation Sans","Noto Sans CJK SC",sans-serif' font-size="11.16">-100.0</text><path d="M3 682.5H1190" stroke="#744830" stroke-width="1" stroke-dasharray="2 2 1 3"/><path d="M1192 682.5h3" stroke="#a01414"/><text x="1198.0 1204.0 1210.0 1216.0 1222.0 1228.0" y="684.6" fill="#8cf4f4" text-anchor="middle" font-family='"Liberation Sans","Noto Sans CJK SC",sans-serif' font-size="11.16">-150.0</text><path d="M3 723.5H1190" stroke="#744830" stroke-width="1" stroke-dasharray="2 2 1 3"/><path d="M1192 723.5h3" stroke="#a01414"/><text x="1198.0 1204.0 1210.0 1216.0 1222.0 1228.0" y="726.3" fill="#8cf4f4" text-anchor="middle" font-family='"Liberation Sans","Noto Sans CJK SC",sans-serif' font-size="11.16">-200.0</text><path d="M3 766.5H1190" stroke="#744830" stroke-width="1" stroke-dasharray="2 2 1 3"/><path d="M1192 766.5h3" stroke="#a01414"/><text x="1198.0 1204.0 1210.0 1216.0 1222.0 1228.0" y="768.6" fill="#8cf4f4" text-anchor="middle" font-family='"Liberation Sans","Noto Sans CJK SC",sans-serif' font-size="11.16">-250.0</text><path d="M3 807.5H1190" stroke="#744830" stroke-width="1" stroke-dasharray="2 2 1 3"/><path d="M1192 807.5h3" stroke="#a01414"/><text x="1198.0 1204.0 1210.0 1216.0 1222.0 1228.0" y="810.1" fill="#8cf4f4" text-anchor="middle" font-family='"Liberation Sans","Noto Sans CJK SC",sans-serif' font-size="11.16">-300.0</text><path d="M1192 408.5h2" stroke="#a01414"/><path d="M1192 450.5h2" stroke="#a01414"/><path d="M1192 492.5h2" stroke="#a01414"/><path d="M1192 534.5h2" stroke="#a01414"/><path d="M1192 577.5h2" stroke="#a01414"/><path d="M1192 618.5h2" stroke="#a01414"/><path d="M1192 660.5h2" stroke="#a01414"/><path d="M1192 702.5h2" stroke="#a01414"/><path d="M1192 744.5h2" stroke="#a01414"/><path d="M1192 786.5h2" stroke="#a01414"/><polyline points="15.7,639.0 31.5,700.3 47.4,682.4 63.2,639.5 79.1,614.2 94.9,605.7 110.8,596.2 126.6,603.6 142.5,619.5 158.3,640.2 174.2,614.2 190.0,598.3 205.8,548.6 221.7,541.2 237.5,513.7 253.4,539.1 269.2,645.9 285.1,671.2 300.9,739.7 316.8,723.8 332.6,689.0 348.4,680.5 364.3,623.4 380.1,598.1 396.0,595.9 411.8,612.9 427.7,609.7 443.5,591.7 459.4,615.0 475.2,620.3 491.1,610.7 506.9,716.0 522.7,828.0 538.6,762.3 554.4,700.7 570.3,665.9 586.1,637.0 602.0,629.5 617.8,620.1 633.7,606.5 649.5,641.2 665.3,686.9 681.2,714.5 697.0,681.7 712.9,680.6 728.7,652.2 744.6,609.1 760.4,591.3 776.3,563.0 792.1,530.0 808.0,526.4 823.8,521.2 839.6,506.4 855.5,462.0 871.3,436.6 887.2,459.9 903.0,472.0 918.9,487.3 934.7,484.2 950.6,476.8 966.4,439.8 982.2,395.4 998.1,424.0 1013.9,456.0 1029.8,438.7 1045.6,472.0 1061.5,488.3 1077.3,470.5 1093.2,474.6 1109.0,474.6 1124.9,476.7" fill="none" stroke="#d23cd2" stroke-width="1.1" stroke-linejoin="miter"/><g shape-rendering="crispEdges" stroke-width="1" stroke-linejoin="round"><path d="M15.7 639.0L31.5 700.3V639.4H15.7z" fill="#1eff3c" stroke="#1eff3c"/><path d="M31.5 700.3L47.4 682.4V639.4H31.5z" fill="#1eff3c" stroke="#1eff3c"/><path d="M47.4 682.4L63.2 639.5V639.4H47.4z" fill="#1eff3c" stroke="#1eff3c"/><path d="M63.2 639.5L63.3 639.4H63.2z" fill="#1eff3c" stroke="#1eff3c"/><path d="M142.5 619.5L158.3 640.2V639.4H142.5z" fill="#1eff3c" stroke="#1eff3c"/><path d="M158.3 640.2L158.8 639.4H158.3z" fill="#1eff3c" stroke="#1eff3c"/><path d="M253.4 539.1L269.2 645.9V639.4H253.4z" fill="#1eff3c" stroke="#1eff3c"/><path d="M269.2 645.9L285.1 671.2V639.4H269.2z" fill="#1eff3c" stroke="#1eff3c"/><path d="M285.1 671.2L300.9 739.7V639.4H285.1z" fill="#1eff3c" stroke="#1eff3c"/><path d="M300.9 739.7L316.8 723.8V639.4H300.9z" fill="#1eff3c" stroke="#1eff3c"/><path d="M316.8 723.8L332.6 689.0V639.4H316.8z" fill="#1eff3c" stroke="#1eff3c"/><path d="M332.6 689.0L348.4 680.5V639.4H332.6z" fill="#1eff3c" stroke="#1eff3c"/><path d="M348.4 680.5L359.9 639.4H348.4z" fill="#1eff3c" stroke="#1eff3c"/><path d="M491.1 610.7L506.9 716.0V639.4H491.1z" fill="#1eff3c" stroke="#1eff3c"/><path d="M506.9 716.0L522.7 828.0V639.4H506.9z" fill="#1eff3c" stroke="#1eff3c"/><path d="M522.7 828.0L538.6 762.3V639.4H522.7z" fill="#1eff3c" stroke="#1eff3c"/><path d="M538.6 762.3L554.4 700.7V639.4H538.6z" fill="#1eff3c" stroke="#1eff3c"/><path d="M554.4 700.7L570.3 665.9V639.4H554.4z" fill="#1eff3c" stroke="#1eff3c"/><path d="M570.3 665.9L584.8 639.4H570.3z" fill="#1eff3c" stroke="#1eff3c"/><path d="M633.7 606.5L649.5 641.2V639.4H633.7z" fill="#1eff3c" stroke="#1eff3c"/><path d="M649.5 641.2L665.3 686.9V639.4H649.5z" fill="#1eff3c" stroke="#1eff3c"/><path d="M665.3 686.9L681.2 714.5V639.4H665.3z" fill="#1eff3c" stroke="#1eff3c"/><path d="M681.2 714.5L697.0 681.7V639.4H681.2z" fill="#1eff3c" stroke="#1eff3c"/><path d="M697.0 681.7L712.9 680.6V639.4H697.0z" fill="#1eff3c" stroke="#1eff3c"/><path d="M712.9 680.6L728.7 652.2V639.4H712.9z" fill="#1eff3c" stroke="#1eff3c"/><path d="M728.7 652.2L733.4 639.4H728.7z" fill="#1eff3c" stroke="#1eff3c"/><path d="M839.6 506.4L855.5 462.0V471.0H839.6z" fill="#ffa81e" stroke="#ffa81e"/><path d="M855.5 462.0L871.3 436.6V471.0H855.5z" fill="#ffa81e" stroke="#ffa81e"/><path d="M871.3 436.6L887.2 459.9V471.0H871.3z" fill="#ffa81e" stroke="#ffa81e"/><path d="M887.2 459.9L901.7 471.0H887.2z" fill="#ffa81e" stroke="#ffa81e"/><path d="M950.6 476.8L966.4 439.8V471.0H950.6z" fill="#ffa81e" stroke="#ffa81e"/><path d="M966.4 439.8L982.2 395.4V471.0H966.4z" fill="#ffa81e" stroke="#ffa81e"/><path d="M982.2 395.4L998.1 424.0V471.0H982.2z" fill="#ffa81e" stroke="#ffa81e"/><path d="M998.1 424.0L1013.9 456.0V471.0H998.1z" fill="#ffa81e" stroke="#ffa81e"/><path d="M1013.9 456.0L1029.8 438.7V471.0H1013.9z" fill="#ffa81e" stroke="#ffa81e"/><path d="M1029.8 438.7L1045.1 471.0H1029.8z" fill="#ffa81e" stroke="#ffa81e"/><path d="M1061.5 488.3L1077.3 470.5V471.0H1061.5z" fill="#ffa81e" stroke="#ffa81e"/><path d="M1077.3 470.5L1079.2 471.0H1077.3z" fill="#ffa81e" stroke="#ffa81e"/></g><polyline points="15.7,671.8 31.5,701.0 47.4,697.2 63.2,678.3 79.1,671.0 94.9,650.0 110.8,614.2 126.6,602.5 142.5,610.0 158.3,629.0 174.2,610.0 190.0,596.2 205.8,563.4 221.7,543.3 237.5,508.5 253.4,510.1 269.2,547.6 285.1,614.0 300.9,660.0 316.8,684.7 332.6,693.2 348.4,702.1 364.3,682.6 380.1,659.4 396.0,638.2 411.8,649.9 427.7,641.4 443.5,610.3 459.4,641.4 475.2,644.1 491.1,655.1 506.9,678.4 522.7,700.0 538.6,709.0 554.4,714.4 570.3,724.0 586.1,695.5 602.0,700.7 617.8,706.0 633.7,702.4 649.5,717.2 665.3,728.2 681.2,736.7 697.0,723.6 712.9,732.0 728.7,715.5 744.6,670.0 760.4,655.0 776.3,588.0 792.1,518.0 808.0,481.0 823.8,452.5 839.6,451.0 855.5,423.9 871.3,403.4 887.2,402.8 903.0,398.5 918.9,408.5 934.7,403.8 950.6,399.2 966.4,389.0 982.2,382.7 998.1,417.5 1013.9,423.2 1029.8,397.5 1045.6,423.2 1061.5,420.7 1077.3,401.7 1093.2,411.2 1109.0,411.2 1124.9,476.7" fill="none" stroke="#78e6e6" stroke-width="1.1" stroke-linejoin="miter"/><polyline points="15.7,625.5 31.5,685.5 47.4,620.9 63.2,603.0 79.1,608.2 94.9,569.8 110.8,567.7 126.6,608.9 142.5,624.7 158.3,640.6 174.2,587.7 190.0,576.1 205.8,548.2 221.7,564.1 237.5,542.3 253.4,582.5 269.2,615.2 285.1,645.9 300.9,683.7 316.8,687.9 332.6,692.8 348.4,697.4 364.3,615.4 380.1,580.1 396.0,597.6 411.8,634.0 427.7,621.3 443.5,591.3 459.4,639.3 475.2,609.3 491.1,609.3 506.9,658.3 522.7,706.8 538.6,711.5 554.4,713.2 570.3,714.5 586.1,625.7 602.0,661.7 617.8,664.0 633.7,648.0 649.5,693.5 665.3,714.0 681.2,724.8 697.0,672.0 712.9,699.0 728.7,659.8 744.6,574.9 760.4,587.1 776.3,537.0 792.1,514.4 808.0,539.1 823.8,529.6 839.6,546.5 855.5,475.7 871.3,472.1 887.2,488.0 903.0,483.1 918.9,496.2 934.7,484.2 950.6,468.3 966.4,434.5 982.2,402.5 998.1,479.3 1013.9,460.5 1029.8,435.5 1045.6,516.8 1061.5,493.6 1077.3,474.6 1093.2,485.8 1109.0,473.5 1124.9,531.6" fill="none" stroke="#ffffff" stroke-width="2.2" stroke-linejoin="miter"/><path d="M63.2 714.500l4.800 5.500h-9.600z" fill="#e41818"/><path d="M364.3 714.500l4.800 5.500h-9.600z" fill="#e41818"/><path d="M586.1 714.500l4.800 5.500h-9.600z" fill="#e41818"/><path d="M697.0 714.500l4.800 5.500h-9.600z" fill="#e41818"/><path d="M728.7 714.500l4.800 5.500h-9.600z" fill="#e41818"/><path d="M916.4 382l6.500 4.300-5.500 2.500v2.700h-1.200z" fill="#1ee43c"/><path d="M995.6 382l6.500 4.300-5.500 2.500v2.700h-1.200z" fill="#1ee43c"/><path d="M1043.1 382l6.500 4.300-5.500 2.500v2.700h-1.200z" fill="#1ee43c"/><text x="6.0 12.0 18.0 24.0 30.0 36.0 42.0 48.0 54.0 60.0 66.0 72.0 78.0 84.0 90.0 96.0 102.0 108.0" y="378.1" fill="#dcdcdc" text-anchor="middle" font-family='"Liberation Sans","Noto Sans CJK SC",sans-serif' font-size="11.16"><tspan font-family='"Liberation Mono","Noto Sans CJK SC",monospace' font-size="10.56">RSI</tspan>-<tspan font-family='"Liberation Mono","Noto Sans CJK SC",monospace' font-size="10.56">CCI</tspan>-<tspan font-family='"Liberation Mono","Noto Sans CJK SC",monospace' font-size="10.56">KD</tspan>(9,14,6)</text><text x="120.0 126.0 132.0 138.0 144.0 150.0 156.0 162.0 168.0 174.0 180.0" y="378.1" fill="#dc3cdc" text-anchor="middle" font-family='"Liberation Sans","Noto Sans CJK SC",sans-serif' font-size="11.16"><tspan font-family='"Liberation Mono","Noto Sans CJK SC",monospace' font-size="10.56">CC</tspan>1:-89.968</text><text x="189.0" y="379.0" fill="#dc3cdc" text-anchor="middle" font-family='"Liberation Sans","Noto Sans CJK SC",sans-serif' font-size="15.6">↑</text><text x="198.0 204.0 210.0 216.0 222.0 228.0 234.0 240.0 246.0 252.0 258.0 264.0" y="378.1" fill="#f4f4f4" text-anchor="middle" font-family='"Liberation Sans","Noto Sans CJK SC",sans-serif' font-size="11.16"><tspan font-family='"Liberation Mono","Noto Sans CJK SC",monospace' font-size="10.56">RSI</tspan>:-126.414</text><text x="273.0" y="379.0" fill="#f4f4f4" text-anchor="middle" font-family='"Liberation Sans","Noto Sans CJK SC",sans-serif' font-size="15.6">↓</text><text x="282.0 288.0 294.0 300.0 306.0 312.0 318.0 324.0 330.0 336.0 342.0" y="378.1" fill="#54fcfc" text-anchor="middle" font-family='"Liberation Sans","Noto Sans CJK SC",sans-serif' font-size="11.16"><tspan font-family='"Liberation Mono","Noto Sans CJK SC",monospace' font-size="10.56">K</tspan>1:-173.057</text><text x="351.0" y="379.0" fill="#54fcfc" text-anchor="middle" font-family='"Liberation Sans","Noto Sans CJK SC",sans-serif' font-size="15.6">↓</text><text x="357.0 369.0" y="377.8" fill="#f4f4f4" font-family='"Liberation Sans","Noto Sans CJK SC",sans-serif' font-size="11.76">买入</text><text x="384.0 390.0" y="378.1" fill="#f4f4f4" text-anchor="middle" font-family='"Liberation Sans","Noto Sans CJK SC",sans-serif' font-size="11.16">:0</text><text x="399.0" y="379.0" fill="#f4f4f4" text-anchor="middle" font-family='"Liberation Sans","Noto Sans CJK SC",sans-serif' font-size="15.6">↓</text><text x="405.0 417.0" y="377.8" fill="#dc3cdc" font-family='"Liberation Sans","Noto Sans CJK SC",sans-serif' font-size="11.76">卖出</text><text x="432.0 438.0" y="378.1" fill="#dc3cdc" text-anchor="middle" font-family='"Liberation Sans","Noto Sans CJK SC",sans-serif' font-size="11.16">:0</text><path d="M0 242.500H1193" stroke="#f0f0f0" stroke-width="1.300"/><path d="M609.500 67V835" stroke="#e8e8e8" stroke-width="1.300"/><path d="M1191 66V367" stroke="#b41414" stroke-width="1.200"/><path d="M1232.500 66V367" stroke="#b41414" stroke-width="1.200"/><path d="M1190 367H1234" stroke="#dc1414" stroke-width="2"/><path d="M.75 367V836" stroke="#9c1818" stroke-width="1.500"/><path d="M1191 367V836" stroke="#dc1414" stroke-width="2"/><path d="M1233 367V836" stroke="#dc1414" stroke-width="2"/><path d="M0 835H1190" stroke="#5c0c0c" stroke-width="1.400"/><path d="M1190 835H1437" stroke="#dc1414" stroke-width="1.600"/><rect x="0" y="836" width="1437" height="2" fill="#f4f4f4"/></svg>
<svg width="1437" height="899" viewBox="0 0 1437 899"><text x="1258.0" y="82.3" fill="#b4f4e4" stroke="#b4f4e4" stroke-width="0.55" text-anchor="start" font-family='"Liberation Sans","Noto Sans CJK SC",sans-serif' font-size="14.4">000610</text><text x="1311" y="83" fill="#ffff40" font-family='"Liberation Serif","Noto Serif CJK SC",serif' font-size="16.5" font-weight="bold" textLength="65">西安旅游</text><text x="1378.0" y="82.3" fill="#d8d8d8" text-anchor="start" font-family='"Liberation Sans","Noto Sans CJK SC",sans-serif' font-size="13.5">(191)</text><path d="M1233 85.500H1437" stroke="#dc1414"/><text x="1236.0" y="101.6" fill="#28c0c0" stroke="#28c0c0" stroke-width=".3" font-family='"Liberation Serif","Noto Serif CJK SC",serif' font-size="16">委比</text><text x="1326.0" y="101.3" fill="#6cf8f8" stroke="#6cf8f8" stroke-width="0.55" text-anchor="end" font-family='"Liberation Sans","Noto Sans CJK SC",sans-serif' font-size="14.4">-35.82%</text><text x="1334.0" y="101.6" fill="#28c0c0" stroke="#28c0c0" stroke-width=".3" font-family='"Liberation Serif","Noto Serif CJK SC",serif' font-size="16">委差</text><text x="1431.0" y="101.3" fill="#6cf8f8" stroke="#6cf8f8" stroke-width="0.55" text-anchor="end" font-family='"Liberation Sans","Noto Sans CJK SC",sans-serif' font-size="14.4">-672</text><rect x="1233" y="104" width="63" height="2.200" fill="#fc5454"/><rect x="1296" y="104" width="138" height="2.200" fill="#54fcfc"/><text x="1236.0" y="119.6" fill="#28c0c0" stroke="#28c0c0" stroke-width=".3" font-family='"Liberation Serif","Noto Serif CJK SC",serif' font-size="16">卖⑤</text><text x="1326.0" y="119.3" fill="#6cf8f8" stroke="#6cf8f8" stroke-width="0.55" text-anchor="end" font-family='"Liberation Sans","Noto Sans CJK SC",sans-serif' font-size="14.4">6.43</text><text x="1431.0" y="119.3" fill="#6cf8f8" stroke="#6cf8f8" stroke-width="0.55" text-anchor="end" font-family='"Liberation Sans","Noto Sans CJK SC",sans-serif' font-size="14.4">184</text><text x="1236.0" y="137.6" fill="#28c0c0" stroke="#28c0c0" stroke-width=".3" font-family='"Liberation Serif","Noto Serif CJK SC",serif' font-size="16">卖④</text><text x="1326.0" y="137.3" fill="#6cf8f8" stroke="#6cf8f8" stroke-width="0.55" text-anchor="end" font-family='"Liberation Sans","Noto Sans CJK SC",sans-serif' font-size="14.4">6.42</text><text x="1431.0" y="137.3" fill="#6cf8f8" stroke="#6cf8f8" stroke-width="0.55" text-anchor="end" font-family='"Liberation Sans","Noto Sans CJK SC",sans-serif' font-size="14.4">25</text><text x="1236.0" y="155.6" fill="#28c0c0" stroke="#28c0c0" stroke-width=".3" font-family='"Liberation Serif","Noto Serif CJK SC",serif' font-size="16">卖③</text><text x="1326.0" y="155.3" fill="#6cf8f8" stroke="#6cf8f8" stroke-width="0.55" text-anchor="end" font-family='"Liberation Sans","Noto Sans CJK SC",sans-serif' font-size="14.4">6.41</text><text x="1431.0" y="155.3" fill="#6cf8f8" stroke="#6cf8f8" stroke-width="0.55" text-anchor="end" font-family='"Liberation Sans","Noto Sans CJK SC",sans-serif' font-size="14.4">481</text><text x="1236.0" y="173.6" fill="#28c0c0" stroke="#28c0c0" stroke-width=".3" font-family='"Liberation Serif","Noto Serif CJK SC",serif' font-size="16">卖②</text><text x="1326.0" y="173.3" fill="#6cf8f8" stroke="#6cf8f8" stroke-width="0.55" text-anchor="end" font-family='"Liberation Sans","Noto Sans CJK SC",sans-serif' font-size="14.4">6.40</text><text x="1431.0" y="173.3" fill="#6cf8f8" stroke="#6cf8f8" stroke-width="0.55" text-anchor="end" font-family='"Liberation Sans","Noto Sans CJK SC",sans-serif' font-size="14.4">192</text><text x="1236.0" y="191.6" fill="#28c0c0" stroke="#28c0c0" stroke-width=".3" font-family='"Liberation Serif","Noto Serif CJK SC",serif' font-size="16">卖①</text><text x="1326.0" y="191.3" fill="#6cf8f8" stroke="#6cf8f8" stroke-width="0.55" text-anchor="end" font-family='"Liberation Sans","Noto Sans CJK SC",sans-serif' font-size="14.4">6.39</text><text x="1431.0" y="191.3" fill="#6cf8f8" stroke="#6cf8f8" stroke-width="0.55" text-anchor="end" font-family='"Liberation Sans","Noto Sans CJK SC",sans-serif' font-size="14.4">392</text><path d="M1233 195.500H1437" stroke="#dc1414"/><text x="1236.0" y="209.6" fill="#ffff40" stroke="#ffff40" stroke-width="0" font-family='"Liberation Serif","Noto Serif CJK SC",serif' font-size="16" font-weight="bold">最新</text><text x="1326.0" y="209.3" fill="#6cf8f8" stroke="#6cf8f8" stroke-width="0.55" text-anchor="end" font-family='"Liberation Sans","Noto Sans CJK SC",sans-serif' font-size="14.4">6.39</text><text x="1334.0" y="209.6" fill="#28c0c0" stroke="#28c0c0" stroke-width=".3" font-family='"Liberation Serif","Noto Serif CJK SC",serif' font-size="16">现手</text><text x="1431.0" y="209.3" fill="#fc6464" stroke="#fc6464" stroke-width="0.55" text-anchor="end" font-family='"Liberation Sans","Noto Sans CJK SC",sans-serif' font-size="14.4">241</text><path d="M1233 213.500H1437" stroke="#dc1414"/><text x="1236.0" y="227.6" fill="#28c0c0" stroke="#28c0c0" stroke-width=".3" font-family='"Liberation Serif","Noto Serif CJK SC",serif' font-size="16">买①</text><text x="1326.0" y="227.3" fill="#6cf8f8" stroke="#6cf8f8" stroke-width="0.55" text-anchor="end" font-family='"Liberation Sans","Noto Sans CJK SC",sans-serif' font-size="14.4">6.38</text><text x="1431.0" y="227.3" fill="#fc6464" stroke="#fc6464" stroke-width="0.55" text-anchor="end" font-family='"Liberation Sans","Noto Sans CJK SC",sans-serif' font-size="14.4">99</text><text x="1236.0" y="245.6" fill="#28c0c0" stroke="#28c0c0" stroke-width=".3" font-family='"Liberation Serif","Noto Serif CJK SC",serif' font-size="16">买②</text><text x="1326.0" y="245.3" fill="#6cf8f8" stroke="#6cf8f8" stroke-width="0.55" text-anchor="end" font-family='"Liberation Sans","Noto Sans CJK SC",sans-serif' font-size="14.4">6.37</text><text x="1431.0" y="245.3" fill="#fc6464" stroke="#fc6464" stroke-width="0.55" text-anchor="end" font-family='"Liberation Sans","Noto Sans CJK SC",sans-serif' font-size="14.4">176</text><text x="1236.0" y="263.6" fill="#28c0c0" stroke="#28c0c0" stroke-width=".3" font-family='"Liberation Serif","Noto Serif CJK SC",serif' font-size="16">买③</text><text x="1326.0" y="263.3" fill="#6cf8f8" stroke="#6cf8f8" stroke-width="0.55" text-anchor="end" font-family='"Liberation Sans","Noto Sans CJK SC",sans-serif' font-size="14.4">6.36</text><text x="1431.0" y="263.3" fill="#fc6464" stroke="#fc6464" stroke-width="0.55" text-anchor="end" font-family='"Liberation Sans","Noto Sans CJK SC",sans-serif' font-size="14.4">151</text><text x="1236.0" y="281.6" fill="#28c0c0" stroke="#28c0c0" stroke-width=".3" font-family='"Liberation Serif","Noto Serif CJK SC",serif' font-size="16">买④</text><text x="1326.0" y="281.3" fill="#6cf8f8" stroke="#6cf8f8" stroke-width="0.55" text-anchor="end" font-family='"Liberation Sans","Noto Sans CJK SC",sans-serif' font-size="14.4">6.35</text><text x="1431.0" y="281.3" fill="#fc6464" stroke="#fc6464" stroke-width="0.55" text-anchor="end" font-family='"Liberation Sans","Noto Sans CJK SC",sans-serif' font-size="14.4">156</text><text x="1236.0" y="299.6" fill="#28c0c0" stroke="#28c0c0" stroke-width=".3" font-family='"Liberation Serif","Noto Serif CJK SC",serif' font-size="16">买⑤</text><text x="1326.0" y="299.3" fill="#6cf8f8" stroke="#6cf8f8" stroke-width="0.55" text-anchor="end" font-family='"Liberation Sans","Noto Sans CJK SC",sans-serif' font-size="14.4">6.34</text><text x="1431.0" y="299.3" fill="#fc6464" stroke="#fc6464" stroke-width="0.55" text-anchor="end" font-family='"Liberation Sans","Noto Sans CJK SC",sans-serif' font-size="14.4">20</text><path d="M1233 303.500H1437" stroke="#dc1414"/><text x="1236.0" y="317.6" fill="#28c0c0" stroke="#28c0c0" stroke-width=".3" font-family='"Liberation Serif","Noto Serif CJK SC",serif' font-size="16">涨跌</text><text x="1326.0" y="317.3" fill="#6cf8f8" stroke="#6cf8f8" stroke-width="0.55" text-anchor="end" font-family='"Liberation Sans","Noto Sans CJK SC",sans-serif' font-size="14.4">-0.09</text><text x="1334.0" y="317.6" fill="#28c0c0" stroke="#28c0c0" stroke-width=".3" font-family='"Liberation Serif","Noto Serif CJK SC",serif' font-size="16">均价</text><text x="1431.0" y="317.3" fill="#fc6464" stroke="#fc6464" stroke-width="0.55" text-anchor="end" font-family='"Liberation Sans","Noto Sans CJK SC",sans-serif' font-size="14.4">6.56</text><text x="1236.0" y="335.6" fill="#28c0c0" stroke="#28c0c0" stroke-width="0" font-family='"Liberation Serif","Noto Serif CJK SC",serif' font-size="16" font-weight="bold">涨幅</text><text x="1326.0" y="335.3" fill="#6cf8f8" stroke="#6cf8f8" stroke-width="0.55" text-anchor="end" font-family='"Liberation Sans","Noto Sans CJK SC",sans-serif' font-size="14.4">-1.39%</text><text x="1334.0" y="335.6" fill="#28c0c0" stroke="#28c0c0" stroke-width=".3" font-family='"Liberation Serif","Noto Serif CJK SC",serif' font-size="16">前收</text><text x="1431.0" y="335.3" fill="#f0f0f0" stroke="#f0f0f0" stroke-width="0.55" text-anchor="end" font-family='"Liberation Sans","Noto Sans CJK SC",sans-serif' font-size="14.4">6.48</text><text x="1236.0" y="353.6" fill="#28c0c0" stroke="#28c0c0" stroke-width="0" font-family='"Liberation Serif","Noto Serif CJK SC",serif' font-size="16" font-weight="bold">振幅</text><text x="1326.0" y="353.3" fill="#f0f0f0" stroke="#f0f0f0" stroke-width="0.55" text-anchor="end" font-family='"Liberation Sans","Noto Sans CJK SC",sans-serif' font-size="14.4">4.94%</text><text x="1334.0" y="353.6" fill="#28c0c0" stroke="#28c0c0" stroke-width=".3" font-family='"Liberation Serif","Noto Serif CJK SC",serif' font-size="16">今开</text><text x="1431.0" y="353.3" fill="#fc6464" stroke="#fc6464" stroke-width="0.55" text-anchor="end" font-family='"Liberation Sans","Noto Sans CJK SC",sans-serif' font-size="14.4">6.58</text><text x="1236.0" y="371.6" fill="#28c0c0" stroke="#28c0c0" stroke-width=".3" font-family='"Liberation Serif","Noto Serif CJK SC",serif' font-size="16">总手</text><text x="1326.0" y="371.3" fill="#f0f0f0" stroke="#f0f0f0" stroke-width="0.55" text-anchor="end" font-family='"Liberation Sans","Noto Sans CJK SC",sans-serif' font-size="14.4">59293</text><text x="1334.0" y="371.6" fill="#28c0c0" stroke="#28c0c0" stroke-width=".3" font-family='"Liberation Serif","Noto Serif CJK SC",serif' font-size="16">最高</text><text x="1431.0" y="371.3" fill="#fc6464" stroke="#fc6464" stroke-width="0.55" text-anchor="end" font-family='"Liberation Sans","Noto Sans CJK SC",sans-serif' font-size="14.4">6.69</text><text x="1236.0" y="389.6" fill="#28c0c0" stroke="#28c0c0" stroke-width=".3" font-family='"Liberation Serif","Noto Serif CJK SC",serif' font-size="16">总额</text><text x="1326.0" y="389.3" fill="#f0f0f0" stroke="#f0f0f0" stroke-width="0.55" text-anchor="end" font-family='"Liberation Sans","Noto Sans CJK SC",sans-serif' font-size="14.4">3892</text><text x="1334.0" y="389.6" fill="#28c0c0" stroke="#28c0c0" stroke-width=".3" font-family='"Liberation Serif","Noto Serif CJK SC",serif' font-size="16">最低</text><text x="1431.0" y="389.3" fill="#6cf8f8" stroke="#6cf8f8" stroke-width="0.55" text-anchor="end" font-family='"Liberation Sans","Noto Sans CJK SC",sans-serif' font-size="14.4">6.37</text><text x="1236.0" y="407.6" fill="#28c0c0" stroke="#28c0c0" stroke-width=".3" font-family='"Liberation Serif","Noto Serif CJK SC",serif' font-size="16">换手</text><text x="1326.0" y="407.3" fill="#f0f0f0" stroke="#f0f0f0" stroke-width="0.55" text-anchor="end" font-family='"Liberation Sans","Noto Sans CJK SC",sans-serif' font-size="14.4">3.05%</text><text x="1334.0" y="407.6" fill="#28c0c0" stroke="#28c0c0" stroke-width=".3" font-family='"Liberation Serif","Noto Serif CJK SC",serif' font-size="16">量比</text><text x="1431.0" y="407.3" fill="#f0f0f0" stroke="#f0f0f0" stroke-width="0.55" text-anchor="end" font-family='"Liberation Sans","Noto Sans CJK SC",sans-serif' font-size="14.4">2.02</text><text x="1236.0" y="425.6" fill="#28c0c0" stroke="#28c0c0" stroke-width=".3" font-family='"Liberation Serif","Noto Serif CJK SC",serif' font-size="16">分笔</text><text x="1326.0" y="425.3" fill="#f0f0f0" stroke="#f0f0f0" stroke-width="0.55" text-anchor="end" font-family='"Liberation Sans","Noto Sans CJK SC",sans-serif' font-size="14.4">1282</text><text x="1334.0" y="425.6" fill="#28c0c0" stroke="#28c0c0" stroke-width=".3" font-family='"Liberation Serif","Noto Serif CJK SC",serif' font-size="16">均量</text><text x="1431.0" y="425.3" fill="#f0f0f0" stroke="#f0f0f0" stroke-width="0.55" text-anchor="end" font-family='"Liberation Sans","Noto Sans CJK SC",sans-serif' font-size="14.4">46</text><rect x="1233" y="427" width="92" height="2.400" fill="#fc5454"/><rect x="1325" y="427" width="109" height="2.400" fill="#54fcfc"/><text x="1236.0" y="443.6" fill="#28c0c0" stroke="#28c0c0" stroke-width=".3" font-family='"Liberation Serif","Noto Serif CJK SC",serif' font-size="16">外盘</text><text x="1326.0" y="443.3" fill="#fc6464" stroke="#fc6464" stroke-width="0.55" text-anchor="end" font-family='"Liberation Sans","Noto Sans CJK SC",sans-serif' font-size="14.4">27242</text><text x="1334.0" y="443.6" fill="#28c0c0" stroke="#28c0c0" stroke-width=".3" font-family='"Liberation Serif","Noto Serif CJK SC",serif' font-size="16">内盘</text><text x="1431.0" y="443.3" fill="#6cf8f8" stroke="#6cf8f8" stroke-width="0.55" text-anchor="end" font-family='"Liberation Sans","Noto Sans CJK SC",sans-serif' font-size="14.4">32051</text><path d="M1233 447.500H1437" stroke="#dc1414"/><text x="1235.500" y="460" fill="#dcdcdc" font-family='"Liberation Sans","Noto Sans CJK SC",sans-serif' font-size="12.5" textLength="68" lengthAdjust="spacingAndGlyphs">2013/01/11</text><g stroke="#e01818" fill="none"><circle cx="1430" cy="455" r="4.500"/><path d="M1424 455h12M1430 449v12"/></g><path d="M1233 461.500H1437" stroke="#dc1414"/><path d="M1235.5 472.5H1397.5" stroke="#b41818"/><path d="M1235.5 491.5H1397.5" stroke="#b43c3c" stroke-dasharray="1 2"/><path d="M1235.5 510.5H1397.5" stroke="#b43c3c" stroke-dasharray="1 2"/><path d="M1235.5 529.5H1397.5" stroke="#b43c3c" stroke-dasharray="1 2"/><path d="M1235.5 548.5H1397.5" stroke="#b43c3c" stroke-dasharray="1 2"/><path d="M1235.5 567.5H1397.5" stroke="#c41c1c"/><path d="M1235.5 586.5H1397.5" stroke="#b43c3c" stroke-dasharray="1 2"/><path d="M1235.5 605.5H1397.5" stroke="#b43c3c" stroke-dasharray="1 2"/><path d="M1235.5 624.5H1397.5" stroke="#b43c3c" stroke-dasharray="1 2"/><path d="M1235.5 644.5H1397.5" stroke="#b43c3c" stroke-dasharray="1 2"/><path d="M1275.5 472V749" stroke="#b43c3c" stroke-dasharray="1 2"/><path d="M1315.5 472V749" stroke="#b43c3c" stroke-dasharray="1 2"/><path d="M1355.5 472V749" stroke="#b43c3c" stroke-dasharray="1 2"/><path d="M1234.500 462V750M1397.500 472V750" stroke="#c41c1c"/><path d="M1234.500 664.500H1397.500M1234.500 750.500H1437" stroke="#c41c1c"/><text x="1403.0 1409.0 1415.0 1421.0" y="480.1" fill="#fc6464" text-anchor="middle" font-family='"Liberation Sans","Noto Sans CJK SC",sans-serif' font-size="11.16">6.69</text><text x="1403.0 1409.0 1415.0 1421.0" y="499.2" fill="#fc6464" text-anchor="middle" font-family='"Liberation Sans","Noto Sans CJK SC",sans-serif' font-size="11.16">6.65</text><text x="1403.0 1409.0 1415.0 1421.0" y="518.3" fill="#fc6464" text-anchor="middle" font-family='"Liberation Sans","Noto Sans CJK SC",sans-serif' font-size="11.16">6.61</text><text x="1403.0 1409.0 1415.0 1421.0" y="537.4" fill="#fc6464" text-anchor="middle" font-family='"Liberation Sans","Noto Sans CJK SC",sans-serif' font-size="11.16">6.56</text><text x="1403.0 1409.0 1415.0 1421.0" y="556.5" fill="#fc6464" text-anchor="middle" font-family='"Liberation Sans","Noto Sans CJK SC",sans-serif' font-size="11.16">6.52</text><text x="1403.0 1409.0 1415.0 1421.0" y="575.6" fill="#e8f0f0" text-anchor="middle" font-family='"Liberation Sans","Noto Sans CJK SC",sans-serif' font-size="11.16">6.48</text><text x="1403.0 1409.0 1415.0 1421.0" y="594.7" fill="#8cf4f4" text-anchor="middle" font-family='"Liberation Sans","Noto Sans CJK SC",sans-serif' font-size="11.16">6.44</text><text x="1403.0 1409.0 1415.0 1421.0" y="613.8" fill="#8cf4f4" text-anchor="middle" font-family='"Liberation Sans","Noto Sans CJK SC",sans-serif' font-size="11.16">6.40</text><text x="1403.0 1409.0 1415.0 1421.0" y="632.9" fill="#8cf4f4" text-anchor="middle" font-family='"Liberation Sans","Noto Sans CJK SC",sans-serif' font-size="11.16">6.35</text><text x="1403.0 1409.0 1415.0 1421.0" y="652.0" fill="#8cf4f4" text-anchor="middle" font-family='"Liberation Sans","Noto Sans CJK SC",sans-serif' font-size="11.16">6.31</text><text x="1402.0 1408.0 1414.0 1420.0" y="676.1" fill="#8cf4f4" text-anchor="middle" font-family='"Liberation Sans","Noto Sans CJK SC",sans-serif' font-size="11.16">3385</text><text x="1400.0 1412.0" y="745.8" fill="#e4e4e4" font-family='"Liberation Sans","Noto Sans CJK SC",sans-serif' font-size="11.76">实时</text><polyline points="1234.4,522.1 1234.4,512.1 1236.4,491.0 1238.0,500.0 1240.0,517.1 1242.0,510.1 1244.0,514.1 1246.0,508.0 1248.0,492.0 1249.0,500.0 1251.0,494.0 1252.4,482.0 1256.0,481.6 1258.0,488.0 1260.0,496.0 1261.0,504.0 1262.0,496.0 1264.0,499.0 1266.0,512.1 1267.0,522.1 1268.4,510.1 1270.0,518.1 1272.0,514.1 1274.0,526.1 1277.6,535.1 1279.0,526.1 1281.1,518.1 1282.5,520.1 1284.1,526.1 1286.1,522.1 1288.1,524.1 1290.1,518.1 1292.1,519.1 1293.7,513.7 1296.1,513.7 1298.1,518.1 1299.1,522.1 1300.5,518.1 1302.1,520.1 1304.1,526.1 1306.1,523.1 1308.1,526.1 1310.1,524.1 1312.1,526.1 1314.1,523.1 1316.1,525.1 1318.1,530.1 1319.3,523.1 1321.1,530.1 1323.1,535.1 1325.1,531.1 1327.1,538.1 1329.1,544.1 1330.1,553.1 1331.1,545.1 1333.1,546.1 1335.1,550.1 1337.1,554.1 1338.1,558.1 1339.7,551.1 1342.1,549.1 1344.1,556.1 1346.1,559.1 1347.7,562.1 1349.1,554.1 1351.1,558.1 1353.1,561.1 1355.1,571.1 1356.5,578.1 1358.1,585.7 1359.7,574.1 1361.1,565.1 1362.5,563.1 1363.7,570.1 1365.7,563.1 1367.1,572.1 1368.1,584.1 1370.1,582.1 1372.1,590.1 1374.1,598.1 1375.7,608.1 1377.7,600.1 1379.7,582.1 1381.2,588.1 1383.2,596.1 1385.2,603.1 1387.2,604.1 1389.2,600.1 1390.2,603.1 1391.8,612.2 1393.2,609.1" fill="none" stroke="#fff" stroke-width="1.200"/><polyline points="1234.4,496.0 1237.0,497.0 1240.0,501.0 1244.0,502.6 1248.0,502.0 1252.0,499.0 1256.0,497.0 1260.0,496.6 1264.0,498.0 1270.0,499.6 1280.1,502.0 1290.1,502.6 1300.1,503.0 1310.1,503.6 1320.1,504.4 1326.1,505.0 1330.1,506.6 1340.1,509.0 1350.1,511.7 1360.1,515.1 1370.1,518.1 1380.2,522.5 1388.2,526.7 1394.2,529.7" fill="none" stroke="#f4f47c" stroke-width="1.200"/><path d="M1235.5 749.5V665.2M1236.5 749.5V714.9M1237.5 749.5V732.2M1238.5 749.5V725.0M1239.5 749.5V722.1M1240.5 749.5V734.4M1241.5 749.5V739.4M1242.5 749.5V740.9M1244.5 749.5V742.3M1245.5 749.5V739.4M1246.5 749.5V708.0M1247.5 749.5V738.0M1248.5 749.5V732.2M1249.5 749.5V719.0M1250.5 749.5V739.4M1251.5 749.5V732.2M1252.5 749.5V727.2M1253.5 749.5V735.1M1254.5 749.5V723.3M1255.5 749.5V730.8M1256.5 749.5V740.9M1258.5 749.5V739.4M1259.5 749.5V735.1M1260.5 749.5V729.0M1261.5 749.5V740.9M1263.5 749.5V743.7M1264.5 749.5V739.4M1265.5 749.5V716.1M1266.5 749.5V735.1M1267.5 749.5V743.7M1269.5 749.5V742.3M1270.5 749.5V743.7M1271.5 749.5V739.1M1272.5 749.5V743.0M1274.5 749.5V730.1M1275.5 749.5V742.3M1277.5 749.5V739.1M1278.5 749.5V742.3M1279.5 749.5V746.6M1281.5 749.5V745.9M1282.5 749.5V747.3M1284.5 749.5V746.3M1285.5 749.5V746.9M1286.5 749.5V747.3M1288.5 749.5V742.0M1289.5 749.5V747.3M1291.5 749.5V747.8M1292.5 749.5V748.1M1294.5 749.5V742.3M1295.5 749.5V745.9M1297.5 749.5V743.7M1298.5 749.5V747.3M1300.5 749.5V741.3M1301.5 749.5V743.7M1303.5 749.5V747.8M1304.5 749.5V748.1M1306.5 749.5V744.9M1308.5 749.5V745.2M1310.5 749.5V748.4M1312.5 749.5V745.2M1315.5 749.5V744.9M1317.5 749.5V748.1M1319.5 749.5V746.6M1320.5 749.5V748.4M1322.5 749.5V743.0M1324.5 749.5V745.9M1326.5 749.5V743.5M1327.5 749.5V742.6M1329.5 749.5V709.2M1330.5 749.5V746.6M1332.5 749.5V743.7M1333.5 749.5V747.3M1335.5 749.5V746.3M1337.5 749.5V731.1M1338.5 749.5V747.3M1340.5 749.5V748.1M1343.5 749.5V743.0M1345.5 749.5V740.9M1347.5 749.5V746.6M1348.5 749.5V742.3M1350.5 749.5V747.3M1352.5 749.5V745.2M1353.5 749.5V742.0M1355.5 749.5V738.4M1357.5 749.5V738.4M1358.5 749.5V745.9M1360.5 749.5V747.3M1361.5 749.5V745.2M1363.5 749.5V747.8M1365.5 749.5V748.4M1367.5 749.5V737.3M1368.5 749.5V743.0M1370.5 749.5V743.7M1371.5 749.5V744.0M1373.5 749.5V736.3M1374.5 749.5V743.0M1376.5 749.5V740.9M1377.5 749.5V742.6M1379.5 749.5V739.1M1381.5 749.5V737.3M1382.5 749.5V720.3M1383.5 749.5V743.7M1384.5 749.5V746.6M1386.5 749.5V740.1M1387.5 749.5V745.9M1389.5 749.5V732.2M1390.5 749.5V743.7M1392.5 749.5V736.3M1394.5 749.5V743.0M1236.5 749.5v-13.9M1237.5 749.5v-9.9M1238.5 749.5v-19.6M1239.5 749.5v-7.8M1240.5 749.5v-16.2M1241.5 749.5v-12.6M1242.5 749.5v-6.9M1243.5 749.5v-14.3M1244.5 749.5v-6.1M1245.5 749.5v-12.2M1246.5 749.5v-6.2M1247.5 749.5v-6.3M1248.5 749.5v-10.9M1249.5 749.5v-16.2M1250.5 749.5v-6.2M1251.5 749.5v-7.3M1252.5 749.5v-12.1M1253.5 749.5v-15.6M1254.5 749.5v-10.7M1255.5 749.5v-8.3M1256.5 749.5v-14.4M1257.5 749.5v-4.0M1258.5 749.5v-12.2M1259.5 749.5v-6.1M1260.5 749.5v-4.5M1261.5 749.5v-4.1M1262.5 749.5v-5.6M1263.5 749.5v-9.7M1264.5 749.5v-4.2M1265.5 749.5v-7.2M1266.5 749.5v-7.3M1267.5 749.5v-5.1M1268.5 749.5v-6.1M1269.5 749.5v-2.7M1270.5 749.5v-2.6M1271.5 749.5v-3.5M1272.5 749.5v-6.4M1273.5 749.5v-4.7M1274.5 749.5v-3.9M1275.5 749.5v-5.4M1276.5 749.5v-4.5M1277.5 749.5v-2.4M1278.5 749.5v-4.1M1279.5 749.5v-3.7M1280.5 749.5v-2.0M1281.5 749.5v-3.0M1282.5 749.5v-2.8M1283.5 749.5v-3.8M1284.5 749.5v-3.2M1285.5 749.5v-1.8M1286.5 749.5v-3.8M1287.5 749.5v-1.3M1288.5 749.5v-2.0M1289.5 749.5v-2.9M1290.5 749.5v-1.2M1291.5 749.5v-2.1M1292.5 749.5v-0.9M1293.5 749.5v-2.4M1294.5 749.5v-2.5M1295.5 749.5v-2.0M1296.5 749.5v-2.7M1297.5 749.5v-1.4M1298.5 749.5v-2.2M1299.5 749.5v-1.9M1300.5 749.5v-1.8M1301.5 749.5v-1.6M1302.5 749.5v-2.3M1303.5 749.5v-2.4M1304.5 749.5v-1.5M1305.5 749.5v-1.8M1306.5 749.5v-0.7M1307.5 749.5v-1.8M1308.5 749.5v-1.7M1309.5 749.5v-2.3M1310.5 749.5v-2.0M1311.5 749.5v-1.0M1312.5 749.5v-1.2M1313.5 749.5v-1.6M1314.5 749.5v-0.6M1315.5 749.5v-1.3M1316.5 749.5v-0.8M1317.5 749.5v-0.7M1318.5 749.5v-0.6M1319.5 749.5v-1.7M1320.5 749.5v-0.7M1321.5 749.5v-0.9M1322.5 749.5v-1.1M1323.5 749.5v-1.8M1324.5 749.5v-0.6M1325.5 749.5v-1.1M1326.5 749.5v-1.3M1327.5 749.5v-1.8M1328.5 749.5v-1.7M1329.5 749.5v-1.7M1330.5 749.5v-0.9M1331.5 749.5v-1.1M1332.5 749.5v-1.0M1333.5 749.5v-1.7M1334.5 749.5v-1.8M1335.5 749.5v-0.7M1336.5 749.5v-0.7M1337.5 749.5v-0.8M1338.5 749.5v-0.8M1339.5 749.5v-1.1M1340.5 749.5v-1.3M1341.5 749.5v-0.8M1342.5 749.5v-0.5M1343.5 749.5v-1.0M1344.5 749.5v-1.0M1345.5 749.5v-1.2M1346.5 749.5v-1.8M1347.5 749.5v-1.4M1348.5 749.5v-1.2M1349.5 749.5v-1.3M1350.5 749.5v-1.4M1351.5 749.5v-0.5M1352.5 749.5v-1.7M1353.5 749.5v-1.5M1354.5 749.5v-1.6M1355.5 749.5v-1.5M1356.5 749.5v-1.0M1357.5 749.5v-1.0M1358.5 749.5v-0.6M1359.5 749.5v-1.3M1360.5 749.5v-0.5M1361.5 749.5v-0.5M1362.5 749.5v-0.7M1363.5 749.5v-0.7M1364.5 749.5v-2.1M1365.5 749.5v-1.2M1366.5 749.5v-1.1M1367.5 749.5v-1.5M1368.5 749.5v-1.4M1369.5 749.5v-2.2M1370.5 749.5v-1.1M1371.5 749.5v-3.8M1372.5 749.5v-3.0M1373.5 749.5v-1.5M1374.5 749.5v-1.8M1375.5 749.5v-2.1M1376.5 749.5v-2.2M1377.5 749.5v-1.4M1378.5 749.5v-3.7M1379.5 749.5v-4.2M1380.5 749.5v-2.5M1381.5 749.5v-2.6M1382.5 749.5v-1.3M1383.5 749.5v-1.4M1384.5 749.5v-2.1M1385.5 749.5v-1.9M1386.5 749.5v-3.7M1387.5 749.5v-1.6M1388.5 749.5v-1.1M1389.5 749.5v-4.0M1390.5 749.5v-2.7M1391.5 749.5v-1.5M1392.5 749.5v-2.8M1393.5 749.5v-1.1M1394.5 749.5v-2.7M1395.5 749.5v-4.1M1396.5 749.5v-3.8" stroke="#ffff30" stroke-width="1" shape-rendering="crispEdges"/><rect x="1234" y="817" width="203" height="17" fill="#000"/><path d="M1246.5 834l5-17" stroke="#b41818" stroke-width="1"/><path d="M1264.3 834l5-17" stroke="#b41818" stroke-width="1"/><path d="M1282.1 834l5-17" stroke="#b41818" stroke-width="1"/><path d="M1299.9 834l5-17" stroke="#b41818" stroke-width="1"/><path d="M1317.7 834l5-17" stroke="#b41818" stroke-width="1"/><path d="M1335.5 834l5-17" stroke="#b41818" stroke-width="1"/><path d="M1353.3 834l5-17" stroke="#b41818" stroke-width="1"/><path d="M1371.1 834l5-17" stroke="#b41818" stroke-width="1"/><path d="M1388.9 834l5-17" stroke="#b41818" stroke-width="1"/><path d="M1406.7 834l5-17" stroke="#b41818" stroke-width="1"/><path d="M1424.5 834l5-17" stroke="#b41818" stroke-width="1"/><path d="M1442.3 834l5-17" stroke="#b41818" stroke-width="1"/><text x="1233.5 1251.3 1269.1 1286.9 1304.7 1322.5 1340.3 1358.1 1375.9 1393.7 1411.5" y="832" fill="#f4f4f4" font-family='"Liberation Serif","Noto Serif CJK SC",serif' font-size="16.5" font-weight="bold">细价盘<tspan fill="#fc3c3c">势</tspan>周指财讯成特解</text></svg>
<svg width="1437" height="899" viewBox="0 0 1437 899"><rect x="0" y="838" width="1437" height="22.500" fill="#000"/><text x="6" y="854" fill="#f0f0f0" font-family='"Liberation Serif","Noto Serif CJK SC",serif' font-size="16">沪</text><text x="30.0" y="853.5" fill="#54fcfc" stroke="#54fcfc" stroke-width="0.45" text-anchor="start" font-family='"Liberation Sans","Noto Sans CJK SC",sans-serif' font-size="14.4">2243.00 -40.66</text><text x="130.0" y="853.5" fill="#e0e0e0" stroke="#e0e0e0" stroke-width="0.45" text-anchor="start" font-family='"Liberation Sans","Noto Sans CJK SC",sans-serif' font-size="14.4">-1.78% 1015.51</text><text x="230" y="854.500" fill="#e8e8e8" font-family='"Liberation Serif","Noto Serif CJK SC",serif' font-size="16">亿</text><rect x="251" y="842" width="31" height="6" fill="#fc5454"/><rect x="282" y="842" width="30" height="6" fill="#1cf0f0"/><rect x="251" y="850" width="3.200" height="7.500" fill="#1cf0f0"/><rect x="257.45" y="850" width="3.200" height="7.500" fill="#1cf0f0"/><rect x="263.9" y="850" width="3.200" height="7.500" fill="#1cf0f0"/><rect x="270.35" y="850" width="3.200" height="7.500" fill="#1cf0f0"/><rect x="276.8" y="850" width="3.200" height="7.500" fill="#1cf0f0"/><rect x="283.25" y="850" width="3.200" height="7.500" fill="#1cf0f0"/><rect x="289.7" y="850" width="3.200" height="7.500" fill="#1cf0f0"/><rect x="296.15" y="850" width="3.200" height="7.500" fill="#1cf0f0"/><rect x="302.6" y="850" width="3.200" height="7.500" fill="#1cf0f0"/><rect x="309.05" y="850" width="3.200" height="7.500" fill="#1cf0f0"/><text x="626" y="854" fill="#f0f0f0" font-family='"Liberation Serif","Noto Serif CJK SC",serif' font-size="16">深</text><text x="649.0" y="853.5" fill="#54fcfc" stroke="#54fcfc" stroke-width="0.45" text-anchor="start" font-family='"Liberation Sans","Noto Sans CJK SC",sans-serif' font-size="14.4">9017.73 -152.33</text><text x="757.0" y="853.5" fill="#e0e0e0" stroke="#e0e0e0" stroke-width="0.45" text-anchor="start" font-family='"Liberation Sans","Noto Sans CJK SC",sans-serif' font-size="14.4">-1.66% 1053.91</text><text x="857" y="854.500" fill="#e8e8e8" font-family='"Liberation Serif","Noto Serif CJK SC",serif' font-size="16">亿</text><rect x="880" y="842" width="32" height="6" fill="#fc5454"/><rect x="912" y="842" width="29" height="6" fill="#1cf0f0"/><rect x="880" y="850" width="3.200" height="7.500" fill="#1cf0f0"/><rect x="886.45" y="850" width="3.200" height="7.500" fill="#1cf0f0"/><rect x="892.9" y="850" width="3.200" height="7.500" fill="#1cf0f0"/><rect x="899.35" y="850" width="3.200" height="7.500" fill="#1cf0f0"/><rect x="905.8" y="850" width="3.200" height="7.500" fill="#1cf0f0"/><rect x="912.25" y="850" width="3.200" height="7.500" fill="#1cf0f0"/><rect x="918.7" y="850" width="3.200" height="7.500" fill="#1cf0f0"/><rect x="925.15" y="850" width="3.200" height="7.500" fill="#1cf0f0"/><rect x="931.6" y="850" width="3.200" height="7.500" fill="#1cf0f0"/><rect x="938.05" y="850" width="3.200" height="7.500" fill="#1cf0f0"/><path d="M1242.5 839V860" stroke="#b01414"/><path d="M1265.5 839V860" stroke="#b01414"/><path d="M1285.5 839V860" stroke="#b01414"/><path d="M1352.5 839V860" stroke="#b01414"/><g fill="none" stroke="#e03030" stroke-width=".9"><path d="M1270.500 843.500q-1.500 2.500 0 5M1280.500 843.500q1.500 2.500 0 5M1272.500 844.500q-.8 1.500 0 3M1278.500 844.500q.8 1.500 0 3"/></g><circle cx="1275.500" cy="846" r="1.300" fill="#e03030"/><path d="M1275.500 848l-3 9h6z" fill="#c8d8f8"/><path d="M1272 857.500h7" stroke="#4060d0" stroke-width="1.500"/><text x="1287" y="855" fill="#3cecec" font-family='"Liberation Sans","Noto Sans CJK SC",sans-serif' font-size="12.5" letter-spacing="-.3">基金科瑞</text><text x="1341" y="856.500" fill="#3cecec" text-anchor="middle" font-family='"Liberation Sans","Noto Sans CJK SC",sans-serif' font-size="17">↓</text><text x="1355.0" y="855.5" fill="#a8a8a8" text-anchor="start" font-family='"Liberation Sans","Noto Sans CJK SC",sans-serif' font-size="13.5">10:33:39</text><defs><linearGradient id="tbg" x1="0" y1="0" x2="0" y2="1"><stop offset="0" stop-color="#5d9ad6"/><stop offset=".06" stop-color="#3f84cc"/><stop offset=".5" stop-color="#2a70bd"/><stop offset="1" stop-color="#1f62ae"/></linearGradient><linearGradient id="tbh" x1="0" y1="0" x2="1" y2="0"><stop offset="0" stop-color="#2a6fb0"/><stop offset=".04" stop-color="#3a88c8"/><stop offset=".25" stop-color="#3f92d2"/><stop offset=".5" stop-color="#2c80c6"/><stop offset=".7" stop-color="#2066ae"/><stop offset=".8" stop-color="#1c5696"/><stop offset="1" stop-color="#1a4c8a"/></linearGradient><radialGradient id="orb" cx=".5" cy=".35" r=".7"><stop offset="0" stop-color="#9fd4ff"/><stop offset=".55" stop-color="#2f7fd0"/><stop offset="1" stop-color="#0c2f6a"/></radialGradient><linearGradient id="btn" x1="0" y1="0" x2="0" y2="1"><stop offset="0" stop-color="#a8cdf2" stop-opacity=".75"/><stop offset=".5" stop-color="#6aa8e2" stop-opacity=".55"/><stop offset="1" stop-color="#5a9ee0" stop-opacity=".65"/></linearGradient></defs><rect x="0" y="860" width="1437" height="39" fill="url(#tbh)"/><rect x="0" y="860" width="1437" height="39" fill="url(#tbg)" opacity=".35"/><rect x="0" y="860" width="1437" height="1" fill="#8cb8e4" opacity=".8"/><path d="M1026 860q30 16 46 39h12q-16-24-44-39z" fill="#d8ecff" opacity=".55"/><circle cx="25" cy="880" r="19" fill="#163a70" opacity=".55"/><circle cx="25" cy="880" r="17.500" fill="url(#orb)" stroke="#0a2450" stroke-width="1"/><path d="M15.500 874.500q4-2.500 8.500-.8v7q-4.500-1.600-8.500.8z" fill="#f05a28"/><path d="M25.500 874q4.500 1.800 9-.6v7q-4.500 2.400-9 .6z" fill="#7cc030"/><path d="M15.500 883q4-2.500 8.500-.8v6.500q-4.500-1.600-8.500.8z" fill="#30a0e8"/><path d="M25.500 882.500q4.500 1.800 9-.6v6.500q-4.500 2.400-9 .6z" fill="#f8c820"/><rect x="58.5" y="861.500" width="57" height="37" rx="2.500" fill="url(#btn)" stroke="#cfe4fa" stroke-opacity=".8" stroke-width="1" opacity="0.8"/><rect x="57.5" y="860.500" width="59" height="39" rx="3" fill="none" stroke="#1a3c6c" stroke-opacity=".7"/><rect x="182.5" y="861.500" width="57" height="37" rx="2.500" fill="url(#btn)" stroke="#cfe4fa" stroke-opacity=".8" stroke-width="1" opacity="0.8"/><rect x="181.5" y="860.500" width="59" height="39" rx="3" fill="none" stroke="#1a3c6c" stroke-opacity=".7"/><rect x="244.5" y="861.500" width="57" height="37" rx="2.500" fill="url(#btn)" stroke="#cfe4fa" stroke-opacity=".8" stroke-width="1" opacity="1"/><rect x="243.5" y="860.500" width="59" height="39" rx="3" fill="none" stroke="#1a3c6c" stroke-opacity=".7"/><rect x="306.5" y="861.500" width="57" height="37" rx="2.500" fill="url(#btn)" stroke="#cfe4fa" stroke-opacity=".8" stroke-width="1" opacity="0.8"/><rect x="305.5" y="860.500" width="59" height="39" rx="3" fill="none" stroke="#1a3c6c" stroke-opacity=".7"/><text x="74.500" y="893" font-family='"Liberation Sans",sans-serif' font-size="37" font-weight="bold" fill="#3ab8f6" stroke="#0f5cae" stroke-width=".7">e</text><path d="M72 889c-3-7 6-19 22-23 6-1.500 9 0 8 4" fill="none" stroke="#f4c81c" stroke-width="2.600" stroke-linecap="round"/><path d="M73 890c2 4 9 3 15-1" fill="none" stroke="#f4c81c" stroke-width="2" stroke-linecap="round"/><rect x="140" y="865" width="22" height="28" rx="2" fill="#d8e8f8" opacity=".6"/><rect x="136.500" y="867.500" width="22" height="26" rx="2" fill="#e4eef8" stroke="#8aa8c8"/><circle cx="147" cy="880.500" r="8.500" fill="#f07818" stroke="#c85808"/><path d="M144 875.500v10l8.500-5z" fill="#fff"/><path d="M194 869h12l2 3h22v22h-36z" fill="#f0d878" stroke="#b89830" stroke-width="1"/><path d="M194 875h36v19h-36z" fill="#f8e8a0" stroke="#c0a040" stroke-width=".8"/><rect x="199" y="866" width="8" height="4" fill="#40b040"/><rect x="208" y="867" width="8" height="4" fill="#d04040"/><path d="M200 884h24v10h-24z" fill="#88c0f0" stroke="#4888c8"/><path d="M203 887h18" stroke="#e8f4ff" stroke-width="2"/><g fill="#d41020" stroke="#5c0008" stroke-width=".9"><path d="M261.3 870.5l5.700 -4.400 5.700 4.400 -5.700 4.400z"/><path d="M273.3 870.5l5.700 -4.400 5.700 4.400 -5.700 4.400z"/><path d="M255.3 878l5.700 -4.400 5.700 4.400 -5.700 4.400z"/><path d="M267.3 878l5.700 -4.400 5.700 4.400 -5.700 4.400z"/><path d="M279.3 878l5.700 -4.400 5.700 4.400 -5.700 4.400z"/><path d="M261.3 885.5l5.700 -4.400 5.700 4.400 -5.700 4.400z"/><path d="M273.3 885.5l5.700 -4.400 5.700 4.400 -5.700 4.400z"/></g><g fill="#ff7a7a" opacity=".55"><path d="M264 869.5l3 -2.400 3 2.400z"/><path d="M276 869.5l3 -2.400 3 2.400z"/><path d="M258 877l3 -2.400 3 2.400z"/><path d="M270 877l3 -2.400 3 2.400z"/><path d="M282 877l3 -2.400 3 2.400z"/><path d="M264 884.5l3 -2.400 3 2.400z"/><path d="M276 884.5l3 -2.400 3 2.400z"/></g><rect x="319" y="864" width="37" height="32" rx="1" fill="#f4e0a0" stroke="#d8b850"/><path d="M334 886c-2-8 4-14 12-18l-1-3 9 1-3 9-1.500-3c-5 3-8 7-7 12z" fill="#e83020"/><ellipse cx="336" cy="888" rx="10" ry="6.500" fill="#fff" stroke="#e02818" stroke-width="2.200"/><circle cx="335" cy="889" r="3" fill="#181818"/><path d="M326 880q-4 3-3 8" stroke="#e02818" stroke-width="2" fill="none"/><text x="1168.500" y="885" fill="#f4f8ff" font-family='"Liberation Mono","Noto Sans CJK SC",monospace' font-size="11.500" textLength="13" lengthAdjust="spacingAndGlyphs">CH</text><rect x="1189.500" y="874.500" width="16" height="10" rx="2" fill="#d8dce4" stroke="#5a6a80"/><path d="M1192 878h11M1192 881h11" stroke="#6a7890" stroke-dasharray="1.500 1"/><path d="M1196 874q1-3 4-3" stroke="#c8d0dc" fill="none"/><circle cx="1220" cy="879" r="7.500" fill="#2848c0" stroke="#e8f0ff" stroke-width="1.400"/><text x="1220" y="883.500" text-anchor="middle" fill="#fff" font-family='"Liberation Sans","Noto Sans CJK SC",sans-serif' font-size="12" font-weight="bold">?</text><rect x="1237.500" y="870.500" width="6" height="4" fill="none" stroke="#f0f4ff"/><rect x="1240.500" y="868.500" width="6" height="4" fill="#2a70bd" stroke="#f0f4ff"/><path d="M1238.500 883h6l-3 3.500z" fill="#f0f4ff"/><path d="M1255 882.500h8l-4-4.500z" fill="#f4f8ff"/><path d="M1277.500 872v16" stroke="#f4f8ff" stroke-width="1.500"/><path d="M1278 872.500q4-2 7 0t6 0v8q-3 2-6 0t-7 0z" fill="#f4f8ff" stroke="#90a8c8" stroke-width=".6"/><circle cx="1288" cy="885" r="4.500" fill="#e02020" stroke="#fff" stroke-width=".8"/><path d="M1286 883l4 4m0-4l-4 4" stroke="#fff" stroke-width="1.300"/><rect x="1303.500" y="873.500" width="8" height="12" fill="#e8eef8" stroke="#223"/><rect x="1308.500" y="877.500" width="11" height="8" fill="#2a5ea8" stroke="#f0f4ff" stroke-width="1.200"/><path d="M1311 888.500h7" stroke="#f0f4ff" stroke-width="1.400"/><path d="M1326 877h3.500l4.500-4v14l-4.500-4h-3.500z" fill="#f4f8ff" stroke="#8898b0" stroke-width=".6"/><path d="M1337 876q2.500 4 0 8M1340 874q4 6 0 12" stroke="#f4f8ff" fill="none" stroke-width="1.200"/><text x="1385" y="876.500" text-anchor="middle" fill="#fff" font-family='"Liberation Sans","Noto Sans CJK SC",sans-serif' font-size="12.500">10:33</text><text x="1385.500" y="893.500" text-anchor="middle" fill="#fff" font-family='"Liberation Sans","Noto Sans CJK SC",sans-serif' font-size="12.500">2013/1/12</text><rect x="1424.500" y="860.500" width="13" height="39" fill="#4c8cd4" fill-opacity=".5" stroke="#16386c"/><path d="M1425.500 861v38" stroke="#a8ccf0" stroke-opacity=".7"/></svg>
</body></html>
